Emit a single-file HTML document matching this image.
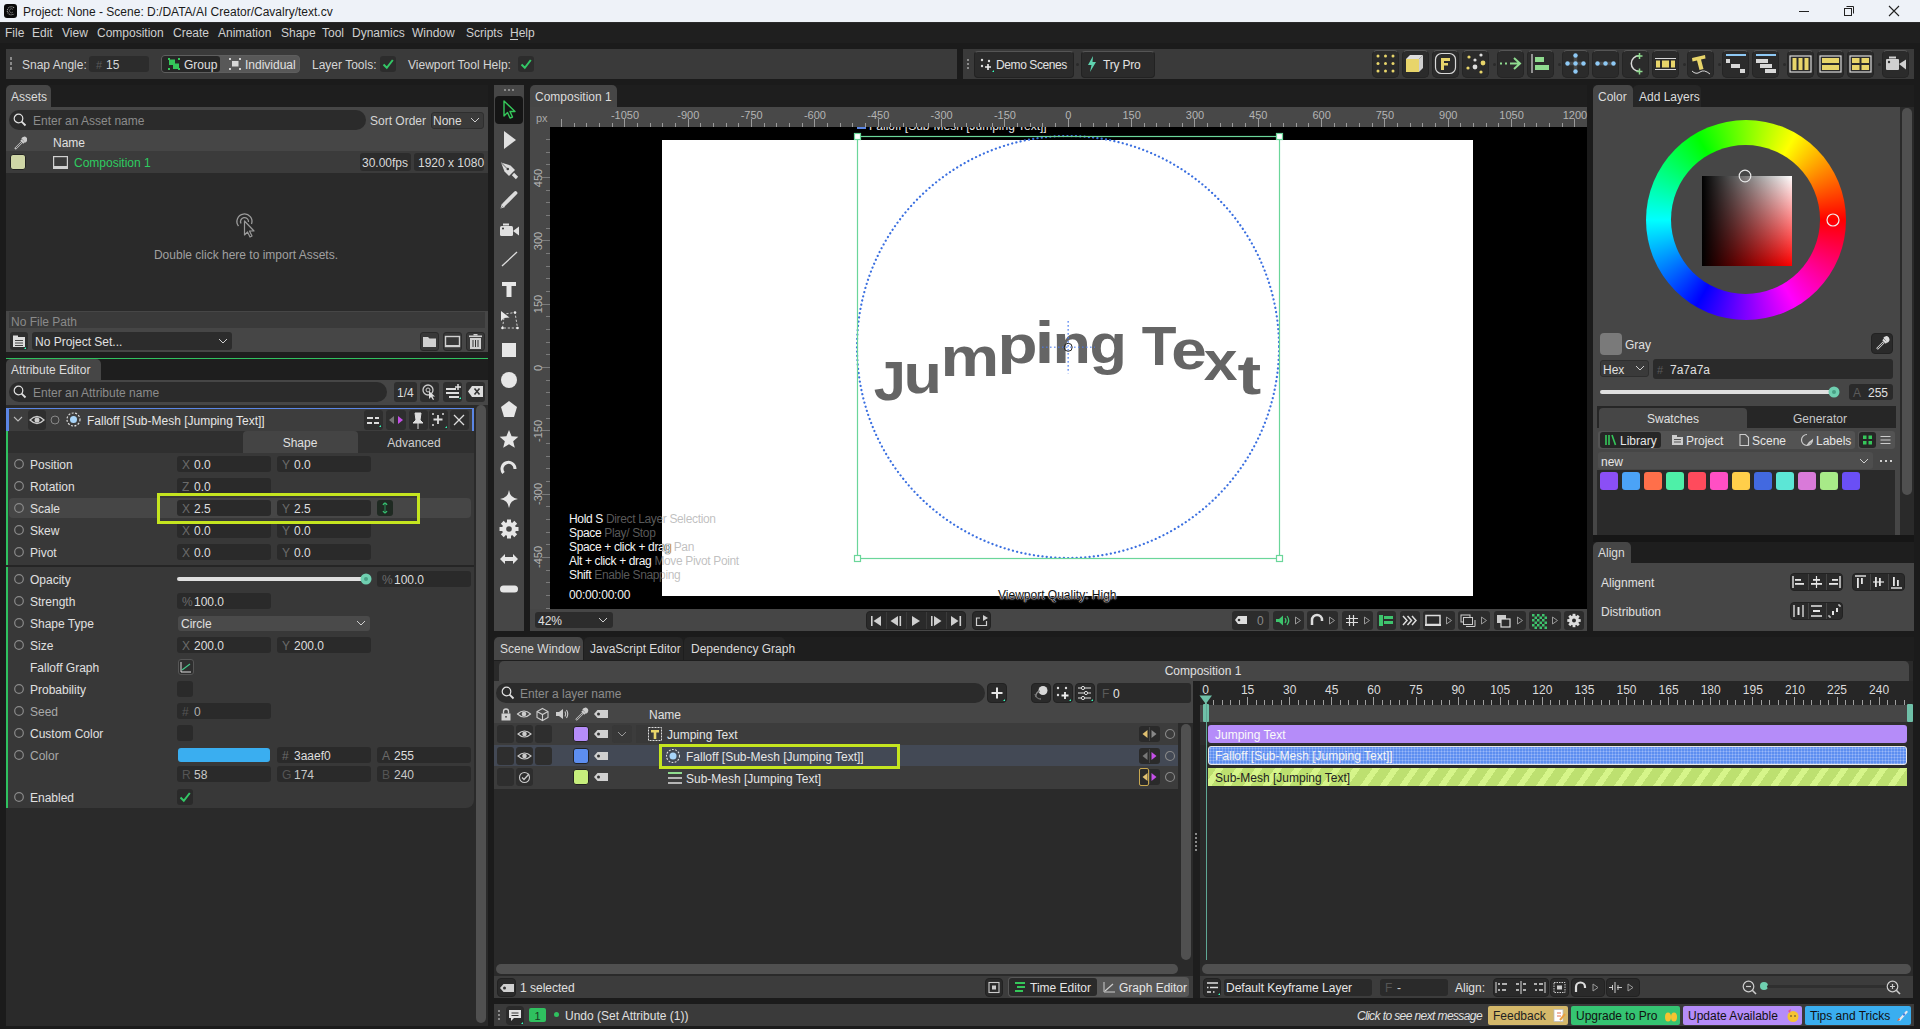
<!DOCTYPE html><html><head><meta charset="utf-8"><style>
html,body{margin:0;padding:0;width:1920px;height:1029px;overflow:hidden;background:#1b1b1b;font-family:"Liberation Sans",sans-serif;}
.a{position:absolute;box-sizing:border-box;}
.t{white-space:pre;}
</style></head><body>
<div class="a" style="left:0px;top:0px;width:1920px;height:23px;background:#eef2f8;"></div>
<div class="a" style="left:0px;top:22px;width:1920px;height:1px;background:#2a2a2a;"></div>
<div class="a" style="left:3.5px;top:4px;width:13px;height:13.5px;background:#0a0a0a;border-radius:3px"></div>
<svg class="a" style="left:3.5px;top:4px;" width="13" height="13.5" viewBox="0 0 13 13.5"><path d="M10 3.8 A4 4 0 1 0 10 9.7" fill="none" stroke="#aaa" stroke-width="1.1" stroke-dasharray="1 0.8"/><path d="M9 5.5 A2 2 0 1 0 9 8" fill="none" stroke="#777" stroke-width="0.8"/></svg>
<div class="a t" style="left:23px;top:5.0px;line-height:14px;font-size:12px;color:#1a1a1a;">Project: None - Scene: D:/DATA/AI Creator/Cavalry/text.cv</div>
<div class="a" style="left:1799px;top:11px;width:10px;height:1px;background:#222;"></div>
<svg class="a" style="left:1843px;top:5px;" width="12" height="12" viewBox="0 0 12 12"><rect x="1.5" y="3.5" width="7" height="7" fill="none" stroke="#222"/><path d="M3.5 1.5 H10.5 V8.5" fill="none" stroke="#222"/></svg>
<svg class="a" style="left:1888px;top:5px;" width="12" height="12" viewBox="0 0 12 12"><path d="M1 1 L11 11 M11 1 L1 11" stroke="#222" stroke-width="1.1"/></svg>
<div class="a" style="left:0px;top:23px;width:1920px;height:20px;background:#1f1f1f;"></div>
<div class="a t" style="left:5px;top:26.0px;line-height:14px;font-size:12px;color:#cfcfcf;">File</div>
<div class="a t" style="left:32px;top:26.0px;line-height:14px;font-size:12px;color:#cfcfcf;">Edit</div>
<div class="a t" style="left:62px;top:26.0px;line-height:14px;font-size:12px;color:#cfcfcf;">View</div>
<div class="a t" style="left:97px;top:26.0px;line-height:14px;font-size:12px;color:#cfcfcf;">Composition</div>
<div class="a t" style="left:173px;top:26.0px;line-height:14px;font-size:12px;color:#cfcfcf;">Create</div>
<div class="a t" style="left:218px;top:26.0px;line-height:14px;font-size:12px;color:#cfcfcf;">Animation</div>
<div class="a t" style="left:281px;top:26.0px;line-height:14px;font-size:12px;color:#cfcfcf;">Shape</div>
<div class="a t" style="left:322px;top:26.0px;line-height:14px;font-size:12px;color:#cfcfcf;">Tool</div>
<div class="a t" style="left:352px;top:26.0px;line-height:14px;font-size:12px;color:#cfcfcf;">Dynamics</div>
<div class="a t" style="left:412px;top:26.0px;line-height:14px;font-size:12px;color:#cfcfcf;">Window</div>
<div class="a t" style="left:466px;top:26.0px;line-height:14px;font-size:12px;color:#cfcfcf;">Scripts</div>
<div class="a t" style="left:510px;top:26.0px;line-height:14px;font-size:12px;color:#cfcfcf;">Help</div>
<div class="a" style="left:510px;top:39px;width:8px;height:1px;background:#cfcfcf;"></div>
<div class="a" style="left:6px;top:49px;width:951px;height:30px;background:#3a3a3a;"></div>
<div class="a" style="left:963px;top:49px;width:951px;height:30px;background:#3a3a3a;"></div>
<div class="a" style="left:10px;top:57px;width:2px;height:3px;background:#8a8a8a;"></div>
<div class="a" style="left:10px;top:62px;width:2px;height:3px;background:#8a8a8a;"></div>
<div class="a" style="left:10px;top:67px;width:2px;height:3px;background:#8a8a8a;"></div>
<div class="a t" style="left:22px;top:57.5px;line-height:14px;font-size:12px;color:#d6d6d6;">Snap Angle:</div>
<div class="a" style="left:89px;top:56px;width:60px;height:16px;background:#2c2c2c;border-radius:3px"></div>
<div class="a t" style="left:96px;top:57.5px;line-height:14px;font-size:11px;color:#5a5a5a;">#</div>
<div class="a t" style="left:106px;top:57.5px;line-height:14px;font-size:12px;color:#d6d6d6;">15</div>
<div class="a" style="left:161px;top:55px;width:139px;height:18px;background:#585858;border-radius:4px;border:1px solid #5e5e5e"></div>
<div class="a" style="left:162px;top:56px;width:58px;height:16px;background:#262626;border-radius:3px"></div>
<svg class="a" style="left:167px;top:57px;" width="14" height="14" viewBox="0 0 14 14"><rect x="1" y="1" width="2" height="2" fill="#35c75a"/><rect x="11" y="1" width="2" height="2" fill="#35c75a"/><rect x="1" y="11" width="2" height="2" fill="#35c75a"/><rect x="11" y="11" width="2" height="2" fill="#35c75a"/><rect x="2" y="2.5" width="6" height="5.5" fill="#35c75a"/><rect x="6" y="6.5" width="6" height="5.5" fill="#35c75a"/></svg>
<div class="a t" style="left:184px;top:57.5px;line-height:14px;font-size:12px;color:#e0e0e0;">Group</div>
<svg class="a" style="left:228px;top:57px;" width="14" height="14" viewBox="0 0 14 14"><rect x="1" y="1" width="2" height="2" fill="#d0d0d0"/><rect x="11" y="1" width="2" height="2" fill="#d0d0d0"/><rect x="1" y="11" width="2" height="2" fill="#d0d0d0"/><rect x="11" y="11" width="2" height="2" fill="#d0d0d0"/><rect x="4" y="4" width="6.5" height="5.5" fill="#d8d8d8"/></svg>
<div class="a t" style="left:245px;top:57.5px;line-height:14px;font-size:12px;color:#e0e0e0;">Individual</div>
<div class="a t" style="left:312px;top:57.5px;line-height:14px;font-size:12px;color:#d6d6d6;">Layer Tools:</div>
<div class="a" style="left:380px;top:56px;width:16px;height:16px;background:#2c2c2c;border-radius:3px"></div>
<svg class="a" style="left:380px;top:56px;" width="16" height="16" viewBox="0 0 16 16"><path d="M3.5 8.5 L6.8 11.8 L12.8 4" fill="none" stroke="#33c766" stroke-width="2"/></svg>
<div class="a t" style="left:408px;top:57.5px;line-height:14px;font-size:12px;color:#d6d6d6;">Viewport Tool Help:</div>
<div class="a" style="left:518px;top:56px;width:16px;height:16px;background:#2c2c2c;border-radius:3px"></div>
<svg class="a" style="left:518px;top:56px;" width="16" height="16" viewBox="0 0 16 16"><path d="M3.5 8.5 L6.8 11.8 L12.8 4" fill="none" stroke="#33c766" stroke-width="2"/></svg>
<div class="a" style="left:967px;top:59px;width:2px;height:2px;background:#8a8a8a;"></div>
<div class="a" style="left:967px;top:63px;width:2px;height:2px;background:#8a8a8a;"></div>
<div class="a" style="left:967px;top:67px;width:2px;height:2px;background:#8a8a8a;"></div>
<div class="a" style="left:974px;top:51px;width:100px;height:27px;background:#2b2b2b;border-radius:4px;border:1px solid #222;border-top:1px solid #555"></div>
<svg class="a" style="left:979px;top:57px;" width="16" height="16" viewBox="0 0 16 16"><circle cx="3" cy="3" r="1.2" fill="#ddd"/><circle cx="10" cy="4" r="1.2" fill="#ddd"/><circle cx="3" cy="9" r="1.2" fill="#ddd"/><path d="M9 7 V13 M6 10 H12" stroke="#eee" stroke-width="1.6"/><path d="M13 15 L15 13 V15Z" fill="#3fb"></svg>
<div class="a t" style="left:996px;top:57.5px;line-height:14px;font-size:12px;color:#e2e2e2;letter-spacing:-0.4px">Demo Scenes</div>
<div class="a" style="left:1081px;top:51px;width:74px;height:27px;background:#2b2b2b;border-radius:4px;border:1px solid #222;border-top:1px solid #555"></div>
<svg class="a" style="left:1087px;top:56px;" width="10" height="16" viewBox="0 0 10 16"><path d="M6 0 L1 9 H4.5 L3 16 L9 6 H5.5 Z" fill="#5fd4b0"/></svg>
<div class="a t" style="left:1103px;top:57.5px;line-height:14px;font-size:12px;color:#e2e2e2;letter-spacing:-0.2px">Try Pro</div>
<div class="a" style="left:1076px;top:63px;width:3px;height:3px;background:#2a2a2a;border-radius:2px"></div>
<div class="a" style="left:1372px;top:50px;width:27px;height:28px;background:#2b2b2b;border-radius:5px;border:1px solid #252525;border-top-color:#555"></div>
<svg class="a" style="left:1372px;top:50px;" width="27" height="28" viewBox="0 0 27 28"><circle cx="6.0" cy="6.0" r="1.5" fill="#e8d56a"/><circle cx="6.0" cy="13.5" r="1.5" fill="#e8d56a"/><circle cx="6.0" cy="21.0" r="1.5" fill="#e8d56a"/><circle cx="13.5" cy="6.0" r="1.5" fill="#e8d56a"/><circle cx="13.5" cy="13.5" r="1.5" fill="#e8d56a"/><circle cx="13.5" cy="21.0" r="1.5" fill="#e8d56a"/><circle cx="21.0" cy="6.0" r="1.5" fill="#e8d56a"/><circle cx="21.0" cy="13.5" r="1.5" fill="#e8d56a"/><circle cx="21.0" cy="21.0" r="1.5" fill="#e8d56a"/></svg>
<div class="a" style="left:1402px;top:50px;width:27px;height:28px;background:#2b2b2b;border-radius:5px;border:1px solid #252525;border-top-color:#555"></div>
<svg class="a" style="left:1402px;top:50px;" width="27" height="28" viewBox="0 0 27 28"><path d="M4 9 L8 5 H21 L17 9Z" fill="#ddd"/><path d="M17 9 L21 5 V18 L17 22Z" fill="#cfcfcf"/><rect x="4" y="9" width="13" height="13" fill="#e8d56a"/></svg>
<div class="a" style="left:1432px;top:50px;width:27px;height:28px;background:#2b2b2b;border-radius:5px;border:1px solid #252525;border-top-color:#555"></div>
<svg class="a" style="left:1432px;top:50px;" width="27" height="28" viewBox="0 0 27 28"><rect x="3.5" y="3.5" width="20" height="20" rx="6" fill="none" stroke="#d9d9d9" stroke-width="1.2"/><rect x="9" y="8" width="3" height="12" fill="#e8d56a"/><rect x="9" y="8" width="9" height="3" fill="#e8d56a"/><rect x="9" y="13" width="7" height="2.5" fill="#e8d56a"/></svg>
<div class="a" style="left:1462px;top:50px;width:27px;height:28px;background:#2b2b2b;border-radius:5px;border:1px solid #252525;border-top-color:#555"></div>
<svg class="a" style="left:1462px;top:50px;" width="27" height="28" viewBox="0 0 27 28"><circle cx="7" cy="7" r="1.6" fill="#e8d56a"/><circle cx="19" cy="5" r="1.6" fill="#ddd"/><circle cx="13" cy="10" r="1.6" fill="#ddd"/><circle cx="21" cy="13" r="2.4" fill="#e8d56a"/><circle cx="13" cy="17" r="2.4" fill="#ddd"/><circle cx="6" cy="18" r="1.6" fill="#e8d56a"/><circle cx="19" cy="22" r="1.6" fill="#e8d56a"/></svg>
<div class="a" style="left:1497px;top:50px;width:27px;height:28px;background:#2b2b2b;border-radius:5px;border:1px solid #252525;border-top-color:#555"></div>
<svg class="a" style="left:1497px;top:50px;" width="27" height="28" viewBox="0 0 27 28"><path d="M3 13.5 H5 M8 13.5 H10 M13 13.5 H22 M17 8 L23 13.5 L17 19" fill="none" stroke="#8fdc8f" stroke-width="2"/></svg>
<div class="a" style="left:1527px;top:50px;width:27px;height:28px;background:#2b2b2b;border-radius:5px;border:1px solid #252525;border-top-color:#555"></div>
<svg class="a" style="left:1527px;top:50px;" width="27" height="28" viewBox="0 0 27 28"><path d="M5 4 V23" stroke="#d9d9d9" stroke-width="1.2"/><rect x="8" y="7" width="9" height="5" fill="#8fdc8f"/><rect x="8" y="15" width="14" height="5" fill="#8fdc8f"/></svg>
<div class="a" style="left:1562px;top:50px;width:27px;height:28px;background:#2b2b2b;border-radius:5px;border:1px solid #252525;border-top-color:#555"></div>
<svg class="a" style="left:1562px;top:50px;" width="27" height="28" viewBox="0 0 27 28"><path d="M13.5 5V22M5.5 13.5H21.5" stroke="#484848" stroke-width="3.5"/><circle cx="13.5" cy="5.5" r="2.2" fill="#8ec9f5"/><circle cx="13.5" cy="13.5" r="2.2" fill="#8ec9f5"/><circle cx="13.5" cy="21.5" r="2.2" fill="#8ec9f5"/><circle cx="5.5" cy="13.5" r="2.2" fill="#8ec9f5"/><circle cx="21.5" cy="13.5" r="2.2" fill="#8ec9f5"/></svg>
<div class="a" style="left:1592px;top:50px;width:27px;height:28px;background:#2b2b2b;border-radius:5px;border:1px solid #252525;border-top-color:#555"></div>
<svg class="a" style="left:1592px;top:50px;" width="27" height="28" viewBox="0 0 27 28"><path d="M5.5 13.5H21.5" stroke="#484848" stroke-width="3.5"/><circle cx="5.5" cy="13.5" r="2.2" fill="#8ec9f5"/><circle cx="13.5" cy="13.5" r="2.2" fill="#8ec9f5"/><circle cx="21.5" cy="13.5" r="2.2" fill="#8ec9f5"/></svg>
<div class="a" style="left:1622px;top:50px;width:27px;height:28px;background:#2b2b2b;border-radius:5px;border:1px solid #252525;border-top-color:#555"></div>
<svg class="a" style="left:1622px;top:50px;" width="27" height="28" viewBox="0 0 27 28"><path d="M17 5.8 A7.7 7.7 0 0 0 17 21.2" fill="none" stroke="#d9d9d9" stroke-width="1.5"/><path d="M17.5 3V9M14.5 6H20.5M17.5 18.5V24.5M14.5 21.5H20.5" stroke="#8fdc8f" stroke-width="1.5"/></svg>
<div class="a" style="left:1652px;top:50px;width:27px;height:28px;background:#2b2b2b;border-radius:5px;border:1px solid #252525;border-top-color:#555"></div>
<svg class="a" style="left:1652px;top:50px;" width="27" height="28" viewBox="0 0 27 28"><path d="M3 8.5H24M3 19.5H24" stroke="#d9d9d9" stroke-width="1.2"/><rect x="4" y="10.5" width="4" height="7" fill="#e8d56a"/><rect x="10" y="10.5" width="7" height="7" fill="#e8d56a"/><rect x="19" y="10.5" width="4" height="7" fill="#e8d56a"/></svg>
<div class="a" style="left:1687px;top:50px;width:27px;height:28px;background:#2b2b2b;border-radius:5px;border:1px solid #252525;border-top-color:#555"></div>
<svg class="a" style="left:1687px;top:50px;" width="27" height="28" viewBox="0 0 27 28"><path d="M5 8 L18 5 L18.5 8.5 L14 9.5 L16.5 19 L12.5 20 L10 10.5 L5.5 11.5Z" fill="#e8d56a"/><path d="M5 21 Q9 25 13 22 T23 24" fill="none" stroke="#d9d9d9" stroke-width="1"/></svg>
<div class="a" style="left:1722px;top:50px;width:27px;height:28px;background:#2b2b2b;border-radius:5px;border:1px solid #252525;border-top-color:#555"></div>
<svg class="a" style="left:1722px;top:50px;" width="27" height="28" viewBox="0 0 27 28"><rect x="4" y="4" width="20" height="2" fill="#8ec9f5"/><rect x="4" y="9" width="4" height="4" fill="#d8d8d8"/><rect x="9" y="14" width="9" height="4" fill="#d8d8d8"/><rect x="18" y="19" width="5" height="4" fill="#d8d8d8"/></svg>
<div class="a" style="left:1752px;top:50px;width:27px;height:28px;background:#2b2b2b;border-radius:5px;border:1px solid #252525;border-top-color:#555"></div>
<svg class="a" style="left:1752px;top:50px;" width="27" height="28" viewBox="0 0 27 28"><rect x="4" y="4" width="20" height="2" fill="#8ec9f5"/><rect x="4" y="9" width="12" height="4" fill="#d8d8d8"/><rect x="8" y="14" width="12" height="4" fill="#d8d8d8"/><rect x="13" y="19" width="11" height="4" fill="#d8d8d8"/></svg>
<div class="a" style="left:1787px;top:50px;width:27px;height:28px;background:#2b2b2b;border-radius:5px;border:1px solid #252525;border-top-color:#555"></div>
<svg class="a" style="left:1787px;top:50px;" width="27" height="28" viewBox="0 0 27 28"><rect x="3" y="6" width="21" height="16" fill="none" stroke="#d9d9d9" stroke-width="1.2"/><rect x="5.5" y="8" width="4" height="12" fill="#e8d56a"/><rect x="11.5" y="8" width="4" height="12" fill="#e8d56a"/><rect x="17.5" y="8" width="4" height="12" fill="#e8d56a"/></svg>
<div class="a" style="left:1817px;top:50px;width:27px;height:28px;background:#2b2b2b;border-radius:5px;border:1px solid #252525;border-top-color:#555"></div>
<svg class="a" style="left:1817px;top:50px;" width="27" height="28" viewBox="0 0 27 28"><rect x="3" y="6" width="21" height="16" fill="none" stroke="#d9d9d9" stroke-width="1.2"/><rect x="5" y="8" width="17" height="5" fill="#e8d56a"/><rect x="5" y="15" width="17" height="5" fill="#e8d56a"/></svg>
<div class="a" style="left:1847px;top:50px;width:27px;height:28px;background:#2b2b2b;border-radius:5px;border:1px solid #252525;border-top-color:#555"></div>
<svg class="a" style="left:1847px;top:50px;" width="27" height="28" viewBox="0 0 27 28"><rect x="3" y="6" width="21" height="16" fill="none" stroke="#d9d9d9" stroke-width="1.2"/><rect x="5" y="8" width="7.5" height="5" fill="#e8d56a"/><rect x="14.5" y="8" width="7.5" height="5" fill="#e8d56a"/><rect x="5" y="15" width="7.5" height="5" fill="#e8d56a"/><rect x="14.5" y="15" width="7.5" height="5" fill="#e8d56a"/></svg>
<div class="a" style="left:1882px;top:50px;width:27px;height:28px;background:#2b2b2b;border-radius:5px;border:1px solid #252525;border-top-color:#555"></div>
<svg class="a" style="left:1882px;top:50px;" width="27" height="28" viewBox="0 0 27 28"><rect x="4" y="9" width="13" height="11" rx="1" fill="#d0d0d0"/><rect x="7" y="6.5" width="7" height="2" fill="#d0d0d0"/><path d="M17 14 L24 9.5 V19.5Z" fill="#d0d0d0"/><circle cx="7" cy="12" r="1.2" fill="#333"/></svg>
<div class="a" style="left:1493px;top:63px;width:3px;height:3px;background:#2a2a2a;border-radius:2px"></div>
<div class="a" style="left:1558px;top:63px;width:3px;height:3px;background:#2a2a2a;border-radius:2px"></div>
<div class="a" style="left:1683px;top:63px;width:3px;height:3px;background:#2a2a2a;border-radius:2px"></div>
<div class="a" style="left:1718px;top:63px;width:3px;height:3px;background:#2a2a2a;border-radius:2px"></div>
<div class="a" style="left:1783px;top:63px;width:3px;height:3px;background:#2a2a2a;border-radius:2px"></div>
<div class="a" style="left:1878px;top:63px;width:3px;height:3px;background:#2a2a2a;border-radius:2px"></div>
<div class="a" style="left:6px;top:85px;width:482px;height:22px;background:#1e1e1e;"></div>
<div class="a" style="left:6px;top:85px;width:45px;height:22px;background:#464646;border-radius:5px 5px 0 0"></div>
<div class="a t" style="left:11px;top:90.0px;line-height:14px;font-size:12px;color:#dcdcdc;">Assets</div>
<div class="a" style="left:6px;top:107px;width:482px;height:44px;background:#464646;"></div>
<div class="a" style="left:9px;top:110px;width:357px;height:20px;background:#2b2b2b;border-radius:10px"></div>
<svg class="a" style="left:13px;top:113px;" width="14" height="14" viewBox="0 0 14 14"><circle cx="5.5" cy="5.5" r="4.3" fill="none" stroke="#e0e0e0" stroke-width="1.2"/><path d="M8.6 8.6 L12.5 12.5" stroke="#e0e0e0" stroke-width="1.8"/></svg>
<div class="a t" style="left:33px;top:113.5px;line-height:14px;font-size:12px;color:#8c8c8c;">Enter an Asset name</div>
<div class="a t" style="left:370px;top:113.5px;line-height:14px;font-size:12px;color:#d6d6d6;">Sort Order</div>
<div class="a" style="left:431px;top:112px;width:53px;height:17px;background:#3a3a3a;border-radius:3px;border:1px solid #2e2e2e"></div>
<div class="a t" style="left:433px;top:114.0px;line-height:14px;font-size:12px;color:#dcdcdc;">None</div>
<svg class="a" style="left:469px;top:115px;" width="12" height="10" viewBox="0 0 12 10"><path d="M2 3 L6 7 L10 3" fill="none" stroke="#cfcfcf" stroke-width="1"/></svg>
<svg class="a" style="left:13px;top:136px;" width="14" height="14" viewBox="0 0 14 14"><path d="M2 13 L9 6" stroke="#bbb" stroke-width="2.2"/><path d="M3 12 L9.5 5.5" stroke="#3a3a3a" stroke-width="0.8"/><path d="M8 4 L11 7 M9 3 Q11 0.5 13 2.5 Q14 4.5 11.5 6" fill="#ccc" stroke="#ccc" stroke-width="2"/></svg>
<div class="a t" style="left:53px;top:135.5px;line-height:14px;font-size:12px;color:#e0e0e0;">Name</div>
<div class="a" style="left:6px;top:151px;width:482px;height:22px;background:#3b3b3b;"></div>
<div class="a" style="left:10px;top:154px;width:16px;height:16px;background:#cfd6a6;border-radius:3px;border:1px solid #222"></div>
<svg class="a" style="left:53px;top:156px;" width="15" height="13" viewBox="0 0 15 13"><rect x="0.6" y="0.6" width="13.8" height="10" fill="none" stroke="#d0d0d0" stroke-width="1.2"/><rect x="0" y="10" width="15" height="3" fill="#d0d0d0"/></svg>
<div class="a t" style="left:74px;top:155.5px;line-height:14px;font-size:12px;color:#2ecc60;">Composition 1</div>
<div class="a" style="left:360px;top:153px;width:51px;height:18px;background:#2c2c2c;border-radius:3px"></div>
<div class="a t" style="left:362px;top:155.5px;line-height:14px;font-size:12px;color:#dadada;">30.00fps</div>
<div class="a" style="left:414px;top:153px;width:70px;height:18px;background:#2c2c2c;border-radius:3px"></div>
<div class="a t" style="left:418px;top:155.5px;line-height:14px;font-size:12px;color:#dadada;">1920 x 1080</div>
<div class="a" style="left:6px;top:173px;width:482px;height:138px;background:#2a2a2a;"></div>
<svg class="a" style="left:232px;top:210px;" width="26" height="28" viewBox="0 0 26 28"><path d="M6.5 16 A7.5 7.5 0 1 1 19.5 14" fill="none" stroke="#9a9a9a" stroke-width="1.3"/><path d="M9 13.5 A4 4 0 1 1 16.5 12" fill="none" stroke="#9a9a9a" stroke-width="1.3"/><path d="M12.5 11 V25 L15.5 22 L18 27 L20 26 L17.5 21 H22 Z" fill="#2a2a2a" stroke="#9a9a9a" stroke-width="1.2" stroke-linejoin="round"/></svg>
<div class="a t" style="left:46.0px;top:248.0px;width:400px;text-align:center;line-height:14px;font-size:12px;color:#a0a0a0;">Double click here to import Assets.</div>
<div class="a" style="left:6px;top:311px;width:482px;height:41px;background:#464646;"></div>
<div class="a" style="left:9px;top:312px;width:476px;height:16px;background:#3a3a3a;"></div>
<div class="a t" style="left:11px;top:314.5px;line-height:14px;font-size:12px;color:#8a8a8a;">No File Path</div>
<div class="a" style="left:10px;top:332px;width:18px;height:18px;background:#2e2e2e;border-radius:3px"></div>
<svg class="a" style="left:11px;top:334px;" width="16" height="15" viewBox="0 0 16 15"><rect x="2" y="3" width="12" height="10" fill="#ddd"/><rect x="2" y="1.5" width="5" height="2" fill="#ddd"/><path d="M4 6.5H12M4 9H12M4 11.5H12" stroke="#444" stroke-width="1"/><path d="M13 15 L15 13 V15Z" fill="#3fb"/></svg>
<div class="a" style="left:32px;top:332px;width:200px;height:18px;background:#2c2c2c;border-radius:3px"></div>
<div class="a t" style="left:35px;top:334.5px;line-height:14px;font-size:12px;color:#e0e0e0;">No Project Set...</div>
<svg class="a" style="left:217px;top:336px;" width="12" height="10" viewBox="0 0 12 10"><path d="M2 3 L6 7 L10 3" fill="none" stroke="#cfcfcf" stroke-width="1"/></svg>
<div class="a" style="left:420px;top:332px;width:19px;height:19px;background:#383838;border-radius:3px;border:1px solid #2a2a2a"></div>
<svg class="a" style="left:420px;top:332px;" width="19" height="19" viewBox="0 0 19 19"><path d="M3 5 H8 L9.5 6.5 H16 V15 H3Z" fill="#d0d0d0"/></svg>
<div class="a" style="left:443px;top:332px;width:19px;height:19px;background:#383838;border-radius:3px;border:1px solid #2a2a2a"></div>
<svg class="a" style="left:443px;top:332px;" width="19" height="19" viewBox="0 0 19 19"><rect x="2.5" y="4.5" width="14" height="10" fill="none" stroke="#d0d0d0" stroke-width="1.4"/><rect x="2" y="13" width="15" height="2" fill="#d0d0d0"/></svg>
<div class="a" style="left:466px;top:332px;width:19px;height:19px;background:#383838;border-radius:3px;border:1px solid #2a2a2a"></div>
<svg class="a" style="left:466px;top:332px;" width="19" height="19" viewBox="0 0 19 19"><rect x="4" y="6" width="11" height="11" fill="#d0d0d0"/><rect x="3" y="3.5" width="13" height="1.6" fill="#d0d0d0"/><rect x="7.5" y="2" width="4" height="1.5" fill="#d0d0d0"/><path d="M7 8V15M9.5 8V15M12 8V15" stroke="#333" stroke-width="1"/></svg>
<div class="a" style="left:6px;top:352px;width:482px;height:6px;background:#1e1e1e;"></div>
<div class="a" style="left:6px;top:357.5px;width:482px;height:1.3px;background:#2fc15f;"></div>
<div class="a" style="left:6px;top:359px;width:482px;height:21px;background:#1e1e1e;"></div>
<div class="a" style="left:6px;top:359px;width:95px;height:21px;background:#464646;border-radius:5px 5px 0 0"></div>
<div class="a t" style="left:11px;top:363.0px;line-height:14px;font-size:12px;color:#dcdcdc;">Attribute Editor</div>
<div class="a" style="left:6px;top:380px;width:482px;height:25px;background:#464646;"></div>
<div class="a" style="left:9px;top:382px;width:378px;height:20px;background:#2b2b2b;border-radius:10px"></div>
<svg class="a" style="left:13px;top:385px;" width="14" height="14" viewBox="0 0 14 14"><circle cx="5.5" cy="5.5" r="4.3" fill="none" stroke="#e0e0e0" stroke-width="1.2"/><path d="M8.6 8.6 L12.5 12.5" stroke="#e0e0e0" stroke-width="1.8"/></svg>
<div class="a t" style="left:33px;top:385.5px;line-height:14px;font-size:12px;color:#8c8c8c;">Enter an Attribute name</div>
<div class="a" style="left:394px;top:382px;width:23px;height:20px;background:#2e2e2e;border-radius:3px"></div>
<div class="a t" style="left:397px;top:385.5px;line-height:14px;font-size:12px;color:#dcdcdc;">1/4</div>
<div class="a" style="left:420px;top:382px;width:19px;height:20px;background:#2e2e2e;border-radius:3px"></div>
<svg class="a" style="left:420px;top:382px;" width="19" height="20" viewBox="0 0 19 20"><circle cx="8" cy="8" r="5" fill="none" stroke="#ccc" stroke-width="1.3"/><circle cx="8" cy="8" r="2" fill="none" stroke="#ccc" stroke-width="1"/><path d="M9 9 L9 17 L11 15 L13 18 L14 17.5 L12.5 14.5 L15 14.5Z" fill="#ddd"/></svg>
<div class="a" style="left:443px;top:382px;width:19px;height:20px;background:#2e2e2e;border-radius:3px"></div>
<svg class="a" style="left:443px;top:382px;" width="19" height="20" viewBox="0 0 19 20"><path d="M3 7H13M3 11H16M6 15H16" stroke="#ddd" stroke-width="1.8"/><path d="M15 2V8M12 5H18" stroke="#ddd" stroke-width="1.5"/><path d="M16 17 L18 15 V17Z" fill="#3fb"/></svg>
<div class="a" style="left:466px;top:382px;width:19px;height:20px;background:#2e2e2e;border-radius:3px"></div>
<svg class="a" style="left:466px;top:382px;" width="19" height="20" viewBox="0 0 19 20"><path d="M2 9.5 L6 4 H17 V15 H6Z" fill="#ddd"/><path d="M8.5 6.5 L13.5 12.5 M13.5 6.5 L8.5 12.5" stroke="#333" stroke-width="1.6"/></svg>
<div class="a" style="left:6px;top:405px;width:482px;height:621px;background:#2a2a2a;"></div>
<div class="a" style="left:476px;top:405px;width:10px;height:618px;background:#505050;border-radius:5px"></div>
<div class="a" style="left:6px;top:408px;width:468px;height:23px;background:#3d3d3d;border-top:1.5px solid #5b86e5;border-right:2px solid #5b86e5"></div>
<div class="a" style="left:6px;top:408px;width:3px;height:23px;background:#5b86e5;"></div>
<svg class="a" style="left:12px;top:414px;" width="12" height="10" viewBox="0 0 12 10"><path d="M2 3 L6 7 L10 3" fill="none" stroke="#bbb" stroke-width="1.1"/></svg>
<div class="a" style="left:28px;top:410px;width:18px;height:20px;background:#2e2e2e;border-radius:3px"></div>
<svg class="a" style="left:28px;top:413px;" width="18" height="14" viewBox="0 0 18 14"><path d="M2 7 Q9 0 16 7 Q9 14 2 7Z" fill="none" stroke="#ccc" stroke-width="1.3"/><circle cx="9" cy="7" r="2.5" fill="#ccc"/></svg>
<svg class="a" style="left:49px;top:413px;" width="14" height="14" viewBox="0 0 14 14"><circle cx="6" cy="7" r="4" fill="none" stroke="#888" stroke-width="1"/></svg>
<svg class="a" style="left:65px;top:411px;" width="17" height="17" viewBox="0 0 17 17"><circle cx="8.5" cy="8.5" r="6.5" fill="none" stroke="#ddd" stroke-width="1.2" stroke-dasharray="2 1.5"/><circle cx="8.5" cy="8.5" r="3.5" fill="#a8d4f8"/></svg>
<div class="a t" style="left:87px;top:413.5px;line-height:14px;font-size:12px;color:#e6e6e6;">Falloff [Sub-Mesh [Jumping Text]]</div>
<div class="a" style="left:364px;top:410px;width:19px;height:20px;background:#2e2e2e;border-radius:3px"></div>
<svg class="a" style="left:364px;top:411px;" width="19" height="19" viewBox="0 0 19 19"><path d="M3 7H9M11 7H15M3 12H8M10 12H15" stroke="#ddd" stroke-width="1.8"/><path d="M15 16 L17 14 V16Z" fill="#3fb"/></svg>
<div class="a" style="left:409px;top:410px;width:19px;height:20px;background:#2e2e2e;border-radius:3px"></div>
<svg class="a" style="left:409px;top:411px;" width="19" height="19" viewBox="0 0 19 19"><path d="M6 2 H12 L11 9 L14 12 H4 L7 9Z M9 12 V18" fill="#ddd" stroke="#ddd" stroke-width="1"/></svg>
<div class="a" style="left:429px;top:410px;width:19px;height:20px;background:#2e2e2e;border-radius:3px"></div>
<svg class="a" style="left:429px;top:411px;" width="19" height="19" viewBox="0 0 19 19"><path d="M9 4V13M4.5 8.5H13.5" stroke="#ddd" stroke-width="1.8"/><circle cx="4" cy="3" r="1" fill="#ddd"/><circle cx="14" cy="3" r="1" fill="#ddd"/><circle cx="4" cy="14" r="1" fill="#ddd"/><path d="M16 17 L18 15 V17Z" fill="#3fb"/></svg>
<div class="a" style="left:450px;top:410px;width:19px;height:20px;background:#2e2e2e;border-radius:3px"></div>
<svg class="a" style="left:450px;top:411px;" width="19" height="19" viewBox="0 0 19 19"><path d="M4 4 L14 14 M14 4 L4 14" stroke="#ddd" stroke-width="1.3"/></svg>
<div class="a" style="left:386px;top:410px;width:20px;height:20px;background:#2e2e2e;border-radius:3px"></div>
<svg class="a" style="left:386px;top:410px;" width="20" height="20" viewBox="0 0 20 20"><path d="M8 6 L3 10 L8 14Z" fill="#777"/><path d="M12 6 L17 10 L12 14Z" fill="#c44fe6"/></svg>
<div class="a" style="left:6px;top:431px;width:468px;height:22px;background:#2f2f2f;"></div>
<div class="a" style="left:243px;top:431px;width:115px;height:22px;background:#444444;border-radius:4px 4px 0 0"></div>
<div class="a t" style="left:242.5px;top:435.5px;width:115px;text-align:center;line-height:14px;font-size:12px;color:#e0e0e0;">Shape</div>
<div class="a t" style="left:356.5px;top:435.5px;width:115px;text-align:center;line-height:14px;font-size:12px;color:#cfcfcf;">Advanced</div>
<div class="a" style="left:6px;top:453px;width:468px;height:355px;background:#383838;border-radius:0 0 8px 0"></div>
<div class="a" style="left:6px;top:431px;width:1.5px;height:377px;background:#2fc15f;"></div>
<div class="a" style="left:9px;top:498px;width:462px;height:20px;background:#464646;border-radius:4px"></div>
<svg class="a" style="left:13px;top:458px;" width="12" height="12" viewBox="0 0 12 12"><circle cx="6" cy="6" r="4.3" fill="none" stroke="#8a8a8a" stroke-width="1.2"/></svg>
<div class="a t" style="left:30px;top:457.5px;line-height:14px;font-size:12px;color:#e0e0e0;">Position</div>
<div class="a" style="left:177px;top:456px;width:94px;height:16px;background:#2a2a2a;border-radius:3px"></div>
<div class="a t" style="left:182px;top:457.5px;line-height:14px;font-size:12px;color:#6a6a6a;">X</div>
<div class="a t" style="left:194px;top:457.5px;line-height:14px;font-size:12px;color:#dedede;">0.0</div>
<div class="a" style="left:277px;top:456px;width:94px;height:16px;background:#2a2a2a;border-radius:3px"></div>
<div class="a t" style="left:282px;top:457.5px;line-height:14px;font-size:12px;color:#6a6a6a;">Y</div>
<div class="a t" style="left:294px;top:457.5px;line-height:14px;font-size:12px;color:#dedede;">0.0</div>
<svg class="a" style="left:13px;top:480px;" width="12" height="12" viewBox="0 0 12 12"><circle cx="6" cy="6" r="4.3" fill="none" stroke="#8a8a8a" stroke-width="1.2"/></svg>
<div class="a t" style="left:30px;top:479.5px;line-height:14px;font-size:12px;color:#e0e0e0;">Rotation</div>
<div class="a" style="left:177px;top:478px;width:94px;height:16px;background:#2a2a2a;border-radius:3px"></div>
<div class="a t" style="left:182px;top:479.5px;line-height:14px;font-size:12px;color:#6a6a6a;">Z</div>
<div class="a t" style="left:194px;top:479.5px;line-height:14px;font-size:12px;color:#dedede;">0.0</div>
<svg class="a" style="left:13px;top:502px;" width="12" height="12" viewBox="0 0 12 12"><circle cx="6" cy="6" r="4.3" fill="none" stroke="#8a8a8a" stroke-width="1.2"/></svg>
<div class="a t" style="left:30px;top:501.5px;line-height:14px;font-size:12px;color:#e0e0e0;">Scale</div>
<div class="a" style="left:177px;top:500px;width:94px;height:16px;background:#2a2a2a;border-radius:3px"></div>
<div class="a t" style="left:182px;top:501.5px;line-height:14px;font-size:12px;color:#6a6a6a;">X</div>
<div class="a t" style="left:194px;top:501.5px;line-height:14px;font-size:12px;color:#dedede;">2.5</div>
<div class="a" style="left:277px;top:500px;width:94px;height:16px;background:#2a2a2a;border-radius:3px"></div>
<div class="a t" style="left:282px;top:501.5px;line-height:14px;font-size:12px;color:#6a6a6a;">Y</div>
<div class="a t" style="left:294px;top:501.5px;line-height:14px;font-size:12px;color:#dedede;">2.5</div>
<svg class="a" style="left:13px;top:524px;" width="12" height="12" viewBox="0 0 12 12"><circle cx="6" cy="6" r="4.3" fill="none" stroke="#8a8a8a" stroke-width="1.2"/></svg>
<div class="a t" style="left:30px;top:523.5px;line-height:14px;font-size:12px;color:#e0e0e0;">Skew</div>
<div class="a" style="left:177px;top:522px;width:94px;height:16px;background:#2a2a2a;border-radius:3px"></div>
<div class="a t" style="left:182px;top:523.5px;line-height:14px;font-size:12px;color:#6a6a6a;">X</div>
<div class="a t" style="left:194px;top:523.5px;line-height:14px;font-size:12px;color:#dedede;">0.0</div>
<div class="a" style="left:277px;top:522px;width:94px;height:16px;background:#2a2a2a;border-radius:3px"></div>
<div class="a t" style="left:282px;top:523.5px;line-height:14px;font-size:12px;color:#6a6a6a;">Y</div>
<div class="a t" style="left:294px;top:523.5px;line-height:14px;font-size:12px;color:#dedede;">0.0</div>
<svg class="a" style="left:13px;top:546px;" width="12" height="12" viewBox="0 0 12 12"><circle cx="6" cy="6" r="4.3" fill="none" stroke="#8a8a8a" stroke-width="1.2"/></svg>
<div class="a t" style="left:30px;top:545.5px;line-height:14px;font-size:12px;color:#e0e0e0;">Pivot</div>
<div class="a" style="left:177px;top:544px;width:94px;height:16px;background:#2a2a2a;border-radius:3px"></div>
<div class="a t" style="left:182px;top:545.5px;line-height:14px;font-size:12px;color:#6a6a6a;">X</div>
<div class="a t" style="left:194px;top:545.5px;line-height:14px;font-size:12px;color:#dedede;">0.0</div>
<div class="a" style="left:277px;top:544px;width:94px;height:16px;background:#2a2a2a;border-radius:3px"></div>
<div class="a t" style="left:282px;top:545.5px;line-height:14px;font-size:12px;color:#6a6a6a;">Y</div>
<div class="a t" style="left:294px;top:545.5px;line-height:14px;font-size:12px;color:#dedede;">0.0</div>
<div class="a" style="left:6px;top:565px;width:468px;height:2px;background:#252525;"></div>
<div class="a" style="left:157px;top:493px;width:263px;height:31px;background:transparent;border:3px solid #c5e51f"></div>
<div class="a" style="left:377px;top:500px;width:16px;height:16px;background:#1f2a22;border-radius:3px"></div>
<svg class="a" style="left:377px;top:500px;" width="16" height="16" viewBox="0 0 16 16"><path d="M8 2.5V13.5" stroke="#2a8a55" stroke-width="1"/><path d="M6 5 Q8 1.5 10 5 M6 11 Q8 14.5 10 11" fill="none" stroke="#35c070" stroke-width="1.3"/></svg>
<svg class="a" style="left:13px;top:573px;" width="12" height="12" viewBox="0 0 12 12"><circle cx="6" cy="6" r="4.3" fill="none" stroke="#8a8a8a" stroke-width="1.2"/></svg>
<div class="a t" style="left:30px;top:572.5px;line-height:14px;font-size:12px;color:#e0e0e0;">Opacity</div>
<div class="a" style="left:177px;top:577px;width:190px;height:4px;background:#e0e0e0;border-radius:2px"></div>
<svg class="a" style="left:359px;top:572px;" width="14" height="14" viewBox="0 0 14 14"><circle cx="7" cy="7" r="5.5" fill="#6fcfb0"/><circle cx="7" cy="7" r="2" fill="#4a9f85"/></svg>
<div class="a" style="left:377px;top:571px;width:94px;height:16px;background:#2a2a2a;border-radius:3px"></div>
<div class="a t" style="left:382px;top:572.5px;line-height:14px;font-size:12px;color:#6a6a6a;">%</div>
<div class="a t" style="left:394px;top:572.5px;line-height:14px;font-size:12px;color:#dedede;">100.0</div>
<svg class="a" style="left:13px;top:595px;" width="12" height="12" viewBox="0 0 12 12"><circle cx="6" cy="6" r="4.3" fill="none" stroke="#8a8a8a" stroke-width="1.2"/></svg>
<div class="a t" style="left:30px;top:594.5px;line-height:14px;font-size:12px;color:#e0e0e0;">Strength</div>
<div class="a" style="left:177px;top:593px;width:94px;height:16px;background:#2a2a2a;border-radius:3px"></div>
<div class="a t" style="left:182px;top:594.5px;line-height:14px;font-size:12px;color:#6a6a6a;">%</div>
<div class="a t" style="left:194px;top:594.5px;line-height:14px;font-size:12px;color:#dedede;">100.0</div>
<svg class="a" style="left:13px;top:617px;" width="12" height="12" viewBox="0 0 12 12"><circle cx="6" cy="6" r="4.3" fill="none" stroke="#8a8a8a" stroke-width="1.2"/></svg>
<div class="a t" style="left:30px;top:616.5px;line-height:14px;font-size:12px;color:#e0e0e0;">Shape Type</div>
<div class="a" style="left:178px;top:616px;width:192px;height:15px;background:#4a4a4a;border-radius:3px"></div>
<div class="a t" style="left:181px;top:617.0px;line-height:14px;font-size:12px;color:#e0e0e0;">Circle</div>
<svg class="a" style="left:355px;top:618px;" width="12" height="10" viewBox="0 0 12 10"><path d="M2 3 L6 7 L10 3" fill="none" stroke="#cfcfcf" stroke-width="1"/></svg>
<svg class="a" style="left:13px;top:639px;" width="12" height="12" viewBox="0 0 12 12"><circle cx="6" cy="6" r="4.3" fill="none" stroke="#8a8a8a" stroke-width="1.2"/></svg>
<div class="a t" style="left:30px;top:638.5px;line-height:14px;font-size:12px;color:#e0e0e0;">Size</div>
<div class="a" style="left:177px;top:637px;width:94px;height:16px;background:#2a2a2a;border-radius:3px"></div>
<div class="a t" style="left:182px;top:638.5px;line-height:14px;font-size:12px;color:#6a6a6a;">X</div>
<div class="a t" style="left:194px;top:638.5px;line-height:14px;font-size:12px;color:#dedede;">200.0</div>
<div class="a" style="left:277px;top:637px;width:94px;height:16px;background:#2a2a2a;border-radius:3px"></div>
<div class="a t" style="left:282px;top:638.5px;line-height:14px;font-size:12px;color:#6a6a6a;">Y</div>
<div class="a t" style="left:294px;top:638.5px;line-height:14px;font-size:12px;color:#dedede;">200.0</div>
<div class="a t" style="left:30px;top:660.5px;line-height:14px;font-size:12px;color:#e0e0e0;">Falloff Graph</div>
<div class="a" style="left:178px;top:659px;width:16px;height:16px;background:#2e2e2e;border-radius:3px;border:1px solid #555"></div>
<svg class="a" style="left:178px;top:659px;" width="16" height="16" viewBox="0 0 16 16"><path d="M3 3V13H13" fill="none" stroke="#ddd" stroke-width="1"/><path d="M4 11 L12 5" stroke="#46c88a" stroke-width="1.2"/></svg>
<svg class="a" style="left:13px;top:683px;" width="12" height="12" viewBox="0 0 12 12"><circle cx="6" cy="6" r="4.3" fill="none" stroke="#8a8a8a" stroke-width="1.2"/></svg>
<div class="a t" style="left:30px;top:682.5px;line-height:14px;font-size:12px;color:#e0e0e0;">Probability</div>
<div class="a" style="left:177px;top:681px;width:16px;height:16px;background:#2a2a2a;border-radius:3px"></div>
<svg class="a" style="left:13px;top:705px;" width="12" height="12" viewBox="0 0 12 12"><circle cx="6" cy="6" r="4.3" fill="none" stroke="#8a8a8a" stroke-width="1.2"/></svg>
<div class="a t" style="left:30px;top:704.5px;line-height:14px;font-size:12px;color:#a9a9a9;">Seed</div>
<div class="a" style="left:177px;top:703px;width:94px;height:16px;background:#2a2a2a;border-radius:3px"></div>
<div class="a t" style="left:182px;top:704.5px;line-height:14px;font-size:12px;color:#555;">#</div>
<div class="a t" style="left:194px;top:704.5px;line-height:14px;font-size:12px;color:#b0b0b0;">0</div>
<svg class="a" style="left:13px;top:727px;" width="12" height="12" viewBox="0 0 12 12"><circle cx="6" cy="6" r="4.3" fill="none" stroke="#8a8a8a" stroke-width="1.2"/></svg>
<div class="a t" style="left:30px;top:726.5px;line-height:14px;font-size:12px;color:#e0e0e0;">Custom Color</div>
<div class="a" style="left:177px;top:725px;width:16px;height:16px;background:#2a2a2a;border-radius:3px"></div>
<svg class="a" style="left:13px;top:749px;" width="12" height="12" viewBox="0 0 12 12"><circle cx="6" cy="6" r="4.3" fill="none" stroke="#8a8a8a" stroke-width="1.2"/></svg>
<div class="a t" style="left:30px;top:748.5px;line-height:14px;font-size:12px;color:#a9a9a9;">Color</div>
<div class="a" style="left:178px;top:748px;width:92px;height:14px;background:#3aaef0;border-radius:3px"></div>
<div class="a" style="left:277px;top:747px;width:94px;height:16px;background:#2a2a2a;border-radius:3px"></div>
<div class="a t" style="left:282px;top:748.5px;line-height:14px;font-size:12px;color:#6a6a6a;">#</div>
<div class="a t" style="left:294px;top:748.5px;line-height:14px;font-size:12px;color:#dedede;">3aaef0</div>
<div class="a" style="left:377px;top:747px;width:94px;height:16px;background:#2a2a2a;border-radius:3px"></div>
<div class="a t" style="left:382px;top:748.5px;line-height:14px;font-size:12px;color:#6a6a6a;">A</div>
<div class="a t" style="left:394px;top:748.5px;line-height:14px;font-size:12px;color:#dedede;">255</div>
<div class="a" style="left:177px;top:766px;width:94px;height:16px;background:#2a2a2a;border-radius:3px"></div>
<div class="a t" style="left:182px;top:767.5px;line-height:14px;font-size:12px;color:#555;">R</div>
<div class="a t" style="left:194px;top:767.5px;line-height:14px;font-size:12px;color:#c8c8c8;">58</div>
<div class="a" style="left:277px;top:766px;width:94px;height:16px;background:#2a2a2a;border-radius:3px"></div>
<div class="a t" style="left:282px;top:767.5px;line-height:14px;font-size:12px;color:#555;">G</div>
<div class="a t" style="left:294px;top:767.5px;line-height:14px;font-size:12px;color:#c8c8c8;">174</div>
<div class="a" style="left:377px;top:766px;width:94px;height:16px;background:#2a2a2a;border-radius:3px"></div>
<div class="a t" style="left:382px;top:767.5px;line-height:14px;font-size:12px;color:#555;">B</div>
<div class="a t" style="left:394px;top:767.5px;line-height:14px;font-size:12px;color:#c8c8c8;">240</div>
<svg class="a" style="left:13px;top:791px;" width="12" height="12" viewBox="0 0 12 12"><circle cx="6" cy="6" r="4.3" fill="none" stroke="#8a8a8a" stroke-width="1.2"/></svg>
<div class="a t" style="left:30px;top:790.5px;line-height:14px;font-size:12px;color:#e0e0e0;">Enabled</div>
<div class="a" style="left:177px;top:789px;width:16px;height:16px;background:#2a2a2a;border-radius:3px"></div>
<svg class="a" style="left:177px;top:789px;" width="16" height="16" viewBox="0 0 16 16"><path d="M3.5 8.5 L6.8 11.8 L12.8 4" fill="none" stroke="#33c766" stroke-width="2"/></svg>
<div class="a" style="left:494px;top:85px;width:30px;height:546px;background:#464646;"></div>
<div class="a" style="left:504px;top:89px;width:2px;height:2px;background:#8a8a8a;"></div>
<div class="a" style="left:508px;top:89px;width:2px;height:2px;background:#8a8a8a;"></div>
<div class="a" style="left:512px;top:89px;width:2px;height:2px;background:#8a8a8a;"></div>
<div class="a" style="left:495px;top:96px;width:28px;height:28px;background:#151515;border-radius:4px"></div>
<svg class="a" style="left:495px;top:95px;" width="28" height="28" viewBox="0 0 28 28"><path d="M9 6 L9 21 L12.5 17.5 L15 23 L17.5 22 L15 16.5 L20 16.5 Z" fill="none" stroke="#35c75a" stroke-width="1.4" stroke-linejoin="round"/></svg>
<svg class="a" style="left:495px;top:126px;" width="28" height="28" viewBox="0 0 28 28"><path d="M9 5 L9 23 L21 14 Z" fill="#e0e0e0"/></svg>
<svg class="a" style="left:495px;top:156px;" width="28" height="28" viewBox="0 0 28 28"><path d="M6 6.5 L15.5 9.5 L20 14 L14 20 L9.5 15.5 Z" fill="#dcdcdc"/><path d="M6.5 7 L12 12.5" stroke="#555" stroke-width="0.9"/><circle cx="12.8" cy="13" r="1.3" fill="#444"/><path d="M18 18 L22 22" stroke="#dcdcdc" stroke-width="3.2"/></svg>
<svg class="a" style="left:495px;top:185px;" width="28" height="28" viewBox="0 0 28 28"><path d="M9 19.5 L20.5 8" stroke="#dcdcdc" stroke-width="3.8" stroke-linecap="round"/><path d="M5.5 23.5 L6.8 18.7 L10.2 22.1 Z" fill="#dcdcdc"/><path d="M8 21 L6 23" stroke="#888" stroke-width="0.8"/></svg>
<svg class="a" style="left:495px;top:215px;" width="28" height="28" viewBox="0 0 28 28"><rect x="5" y="11" width="13" height="10" rx="1.5" fill="#e0e0e0"/><rect x="8" y="8.5" width="6" height="2" fill="#e0e0e0"/><path d="M18 16 L24 11.5 V20.5 Z" fill="#e0e0e0"/><circle cx="8" cy="13.5" r="1" fill="#333"/></svg>
<svg class="a" style="left:495px;top:245px;" width="28" height="28" viewBox="0 0 28 28"><path d="M7 21 L22 7" stroke="#ddd" stroke-width="1.3"/></svg>
<svg class="a" style="left:495px;top:275px;" width="28" height="28" viewBox="0 0 28 28"><path d="M7 7 H21 V11 H16.5 V22 H11.5 V11 H7 Z" fill="#e6e6e6"/></svg>
<svg class="a" style="left:495px;top:305px;" width="28" height="28" viewBox="0 0 28 28"><path d="M7.5 23 L9.5 9 L20 7.5 L22.5 23 Z" fill="none" stroke="#ccc" stroke-width="1" stroke-dasharray="2.2 1.8"/><circle cx="7.5" cy="23" r="1.3" fill="#eee"/><circle cx="22.5" cy="23" r="1.3" fill="#eee"/><circle cx="20" cy="7.5" r="1.3" fill="#eee"/><path d="M6 6 L6 16 L9 13 L14.5 12.5 Z" fill="#e6e6e6"/></svg>
<svg class="a" style="left:495px;top:336px;" width="28" height="28" viewBox="0 0 28 28"><rect x="7" y="7" width="14" height="14" fill="#e6e6e6"/></svg>
<svg class="a" style="left:495px;top:366px;" width="28" height="28" viewBox="0 0 28 28"><circle cx="14" cy="14" r="8" fill="#e6e6e6"/></svg>
<svg class="a" style="left:495px;top:395px;" width="28" height="28" viewBox="0 0 28 28"><path d="M14 6 L22 12 L19 22 H9 L6 12 Z" fill="#e6e6e6"/></svg>
<svg class="a" style="left:495px;top:425px;" width="28" height="28" viewBox="0 0 28 28"><path d="M14 5 L16.6 11.2 L23.3 11.8 L18.2 16.2 L19.8 22.8 L14 19.3 L8.2 22.8 L9.8 16.2 L4.7 11.8 L11.4 11.2 Z" fill="#e6e6e6"/></svg>
<svg class="a" style="left:495px;top:455px;" width="28" height="28" viewBox="0 0 28 28"><path d="M8.5 18 A6.5 6.5 0 1 1 20 14" fill="none" stroke="#e6e6e6" stroke-width="3"/></svg>
<svg class="a" style="left:495px;top:485px;" width="28" height="28" viewBox="0 0 28 28"><path d="M14 5 Q15 13 23 14 Q15 15 14 23 Q13 15 5 14 Q13 13 14 5Z" fill="#e6e6e6"/></svg>
<svg class="a" style="left:495px;top:515px;" width="28" height="28" viewBox="0 0 28 28"><circle cx="14" cy="14" r="7" fill="#e6e6e6"/><rect x="12" y="4.5" width="4" height="5" fill="#e6e6e6" transform="rotate(0 14 14)"/><rect x="12" y="4.5" width="4" height="5" fill="#e6e6e6" transform="rotate(45 14 14)"/><rect x="12" y="4.5" width="4" height="5" fill="#e6e6e6" transform="rotate(90 14 14)"/><rect x="12" y="4.5" width="4" height="5" fill="#e6e6e6" transform="rotate(135 14 14)"/><rect x="12" y="4.5" width="4" height="5" fill="#e6e6e6" transform="rotate(180 14 14)"/><rect x="12" y="4.5" width="4" height="5" fill="#e6e6e6" transform="rotate(225 14 14)"/><rect x="12" y="4.5" width="4" height="5" fill="#e6e6e6" transform="rotate(270 14 14)"/><rect x="12" y="4.5" width="4" height="5" fill="#e6e6e6" transform="rotate(315 14 14)"/><circle cx="14" cy="14" r="2.8" fill="#464646"/></svg>
<svg class="a" style="left:495px;top:545px;" width="28" height="28" viewBox="0 0 28 28"><path d="M5 14 L10 9 V12 H18 V9 L23 14 L18 19 V16 H10 V19 Z" fill="#e6e6e6"/></svg>
<svg class="a" style="left:495px;top:575px;" width="28" height="28" viewBox="0 0 28 28"><rect x="5" y="10.5" width="18" height="7" rx="3.5" fill="#e6e6e6"/></svg>
<div class="a" style="left:530px;top:85px;width:1057px;height:22px;background:#1e1e1e;"></div>
<div class="a" style="left:530px;top:85px;width:87px;height:22px;background:#464646;border-radius:5px 5px 0 0"></div>
<div class="a t" style="left:535px;top:90.0px;line-height:14px;font-size:12px;color:#dcdcdc;">Composition 1</div>
<div class="a" style="left:530px;top:107px;width:1057px;height:20px;background:#484848;"></div>
<div class="a" style="left:530px;top:127px;width:20px;height:482px;background:#484848;"></div>
<div class="a t" style="left:536px;top:110.5px;line-height:14px;font-size:11px;color:#a8a8a8;">px</div>
<div class="a" style="left:550px;top:127px;width:1037px;height:482px;background:#000;"></div>
<svg class="a" style="left:530px;top:107px;" width="1057" height="20" viewBox="0 0 1057 20"></svg>
<svg class="a" style="left:0;top:0" width="1920" height="1029"><path d="M561.5 119V127 M574.5 123V127 M586.5 123V127 M599.5 123V127 M612.5 123V127 M624.5 119V127 M637.5 123V127 M650.5 123V127 M662.5 123V127 M675.5 123V127 M688.5 119V127 M700.5 123V127 M713.5 123V127 M726.5 123V127 M738.5 123V127 M751.5 119V127 M764.5 123V127 M776.5 123V127 M789.5 123V127 M802.5 123V127 M814.5 119V127 M827.5 123V127 M840.5 123V127 M852.5 123V127 M865.5 123V127 M878.5 119V127 M890.5 123V127 M903.5 123V127 M916.5 123V127 M928.5 123V127 M941.5 119V127 M954.5 123V127 M966.5 123V127 M979.5 123V127 M992.5 123V127 M1004.5 119V127 M1017.5 123V127 M1030.5 123V127 M1042.5 123V127 M1055.5 123V127 M1068.5 119V127 M1080.5 123V127 M1093.5 123V127 M1106.5 123V127 M1118.5 123V127 M1131.5 119V127 M1144.5 123V127 M1156.5 123V127 M1169.5 123V127 M1182.5 123V127 M1194.5 119V127 M1207.5 123V127 M1220.5 123V127 M1232.5 123V127 M1245.5 123V127 M1258.5 119V127 M1270.5 123V127 M1283.5 123V127 M1296.5 123V127 M1308.5 123V127 M1321.5 119V127 M1334.5 123V127 M1346.5 123V127 M1359.5 123V127 M1372.5 123V127 M1384.5 119V127 M1397.5 123V127 M1410.5 123V127 M1422.5 123V127 M1435.5 123V127 M1448.5 119V127 M1460.5 123V127 M1473.5 123V127 M1486.5 123V127 M1498.5 123V127 M1511.5 119V127 M1524.5 123V127 M1536.5 123V127 M1549.5 123V127 M1562.5 123V127 M1574.5 119V127" stroke="#9a9a9a" stroke-width="1"/></svg>
<div class="a t" style="left:594.99px;top:108.0px;width:60px;text-align:center;line-height:14px;font-size:11px;color:#b4b4b4;">-1050</div>
<div class="a t" style="left:658.3199999999999px;top:108.0px;width:60px;text-align:center;line-height:14px;font-size:11px;color:#b4b4b4;">-900</div>
<div class="a t" style="left:721.65px;top:108.0px;width:60px;text-align:center;line-height:14px;font-size:11px;color:#b4b4b4;">-750</div>
<div class="a t" style="left:784.98px;top:108.0px;width:60px;text-align:center;line-height:14px;font-size:11px;color:#b4b4b4;">-600</div>
<div class="a t" style="left:848.31px;top:108.0px;width:60px;text-align:center;line-height:14px;font-size:11px;color:#b4b4b4;">-450</div>
<div class="a t" style="left:911.64px;top:108.0px;width:60px;text-align:center;line-height:14px;font-size:11px;color:#b4b4b4;">-300</div>
<div class="a t" style="left:974.9699999999999px;top:108.0px;width:60px;text-align:center;line-height:14px;font-size:11px;color:#b4b4b4;">-150</div>
<div class="a t" style="left:1038.3px;top:108.0px;width:60px;text-align:center;line-height:14px;font-size:11px;color:#b4b4b4;">0</div>
<div class="a t" style="left:1101.6299999999999px;top:108.0px;width:60px;text-align:center;line-height:14px;font-size:11px;color:#b4b4b4;">150</div>
<div class="a t" style="left:1164.96px;top:108.0px;width:60px;text-align:center;line-height:14px;font-size:11px;color:#b4b4b4;">300</div>
<div class="a t" style="left:1228.29px;top:108.0px;width:60px;text-align:center;line-height:14px;font-size:11px;color:#b4b4b4;">450</div>
<div class="a t" style="left:1291.62px;top:108.0px;width:60px;text-align:center;line-height:14px;font-size:11px;color:#b4b4b4;">600</div>
<div class="a t" style="left:1354.9499999999998px;top:108.0px;width:60px;text-align:center;line-height:14px;font-size:11px;color:#b4b4b4;">750</div>
<div class="a t" style="left:1418.28px;top:108.0px;width:60px;text-align:center;line-height:14px;font-size:11px;color:#b4b4b4;">900</div>
<div class="a t" style="left:1481.61px;top:108.0px;width:60px;text-align:center;line-height:14px;font-size:11px;color:#b4b4b4;">1050</div>
<div class="a t" style="left:1544.94px;top:108.0px;width:60px;text-align:center;line-height:14px;font-size:11px;color:#b4b4b4;">1200</div>
<svg class="a" style="left:0;top:0" width="1920" height="1029"><path d="M546 139.5H550 M546 152.5H550 M546 164.5H550 M542 177.5H550 M546 190.5H550 M546 202.5H550 M546 215.5H550 M546 228.5H550 M542 240.5H550 M546 253.5H550 M546 266.5H550 M546 278.5H550 M546 291.5H550 M542 304.5H550 M546 316.5H550 M546 329.5H550 M546 342.5H550 M546 354.5H550 M542 367.5H550 M546 380.5H550 M546 392.5H550 M546 405.5H550 M546 418.5H550 M542 430.5H550 M546 443.5H550 M546 456.5H550 M546 468.5H550 M546 481.5H550 M542 494.5H550 M546 506.5H550 M546 519.5H550 M546 532.5H550 M546 544.5H550 M542 557.5H550 M546 570.5H550 M546 582.5H550 M546 595.5H550 M546 608.5H550" stroke="#7a7a7a" stroke-width="1"/></svg>
<div class="a t" style="left:508px;top:550.49px;width:60px;height:14px;line-height:14px;text-align:center;font-size:11px;color:#b4b4b4;transform:rotate(-90deg)">-450</div>
<div class="a t" style="left:508px;top:487.15999999999997px;width:60px;height:14px;line-height:14px;text-align:center;font-size:11px;color:#b4b4b4;transform:rotate(-90deg)">-300</div>
<div class="a t" style="left:508px;top:423.83px;width:60px;height:14px;line-height:14px;text-align:center;font-size:11px;color:#b4b4b4;transform:rotate(-90deg)">-150</div>
<div class="a t" style="left:508px;top:360.5px;width:60px;height:14px;line-height:14px;text-align:center;font-size:11px;color:#b4b4b4;transform:rotate(-90deg)">0</div>
<div class="a t" style="left:508px;top:297.17px;width:60px;height:14px;line-height:14px;text-align:center;font-size:11px;color:#b4b4b4;transform:rotate(-90deg)">150</div>
<div class="a t" style="left:508px;top:233.84px;width:60px;height:14px;line-height:14px;text-align:center;font-size:11px;color:#b4b4b4;transform:rotate(-90deg)">300</div>
<div class="a t" style="left:508px;top:170.51px;width:60px;height:14px;line-height:14px;text-align:center;font-size:11px;color:#b4b4b4;transform:rotate(-90deg)">450</div>
<div class="a" style="left:662px;top:140px;width:811px;height:456px;background:#ffffff;"></div>
<svg class="a" style="left:850px;top:120px;" width="440" height="450" viewBox="0 0 440 450"><circle cx="218" cy="227" r="211" fill="none" stroke="#3a6fe0" stroke-width="2.2" stroke-dasharray="0.1 4.2" stroke-linecap="round"/><rect x="7.5" y="16.5" width="422" height="422" fill="none" stroke="#6bd69a" stroke-width="1.2"/><rect x="4.5" y="13.5" width="6" height="6" fill="#fff" stroke="#6bd69a" stroke-width="1.2"/><rect x="426.5" y="13.5" width="6" height="6" fill="#fff" stroke="#6bd69a" stroke-width="1.2"/><rect x="4.5" y="435.5" width="6" height="6" fill="#fff" stroke="#6bd69a" stroke-width="1.2"/><rect x="426.5" y="435.5" width="6" height="6" fill="#fff" stroke="#6bd69a" stroke-width="1.2"/></svg>
<div class="a" style="left:857px;top:127px;width:9px;height:2px;background:#5b86e5;"></div>
<div class="a t" style="left:869px;top:127px;height:6px;width:200px;overflow:hidden;font-size:12px;line-height:14px;color:#e6e6e6"><div style="margin-top:-8.5px">Falloff [Sub-Mesh [Jumping Text]]</div></div>
<svg class="a" style="left:0;top:0" width="1920" height="1029"><g font-family="Liberation Sans" font-weight="bold" font-size="100" fill="#656565"><text transform="matrix(0.5766 0 0 0.5600 873.75 400.04)">J</text><text transform="matrix(0.6292 0 0 0.5611 903.62 392.74)">u</text><text transform="matrix(0.6605 0 0 0.5519 940.38 375.80)">m</text><text transform="matrix(0.6560 0 0 0.5440 997.41 363.38)">p</text><text transform="matrix(0.7214 0 0 0.6014 1034.45 362.80)">i</text><text transform="matrix(0.6292 0 0 0.5519 1052.50 362.80)">n</text><text transform="matrix(0.6120 0 0 0.5480 1089.45 362.59)">g</text><text transform="matrix(0.5678 0 0 0.5638 1141.63 364.90)">T</text><text transform="matrix(0.6396 0 0 0.5527 1171.14 368.65)">e</text><text transform="matrix(0.6074 0 0 0.5604 1203.79 379.70)">x</text><text transform="matrix(0.7129 0 0 0.5621 1237.59 394.44)">t</text></g></svg>
<svg class="a" style="left:1038px;top:317px;" width="60" height="60" viewBox="0 0 60 60"><path d="M4.3 30.3H57" stroke="#4a7cf0" stroke-width="1.6" stroke-dasharray="1.1 2.9"/><path d="M30.2 4.3V56.4" stroke="#4a7cf0" stroke-width="1.6" stroke-dasharray="1.1 2.9"/><circle cx="30.2" cy="30.3" r="4" fill="none" stroke="#222" stroke-width="1"/></svg>
<div class="a t" style="left:569px;top:511.5px;line-height:14px;font-size:12px;letter-spacing:-0.35px;color:#f4f4f4;text-shadow:0 0 1px #000,0 0 1px #000">Hold S <span style="color:rgba(150,150,150,0.6);text-shadow:none">Direct Layer Selection</span></div>
<div class="a t" style="left:569px;top:525.5px;line-height:14px;font-size:12px;letter-spacing:-0.35px;color:#f4f4f4;text-shadow:0 0 1px #000,0 0 1px #000">Space <span style="color:rgba(150,150,150,0.6);text-shadow:none">Play/ Stop</span></div>
<div class="a t" style="left:569px;top:539.5px;line-height:14px;font-size:12px;letter-spacing:-0.35px;color:#f4f4f4;text-shadow:0 0 1px #000,0 0 1px #000">Space + click + drag <span style="color:rgba(150,150,150,0.6);text-shadow:none">Pan</span></div>
<div class="a t" style="left:569px;top:553.5px;line-height:14px;font-size:12px;letter-spacing:-0.35px;color:#f4f4f4;text-shadow:0 0 1px #000,0 0 1px #000">Alt + click + drag <span style="color:rgba(150,150,150,0.6);text-shadow:none">Move Pivot Point</span></div>
<div class="a t" style="left:569px;top:567.5px;line-height:14px;font-size:12px;letter-spacing:-0.35px;color:#f4f4f4;text-shadow:0 0 1px #000,0 0 1px #000">Shift <span style="color:rgba(150,150,150,0.6);text-shadow:none">Enable Snapping</span></div>
<div class="a t" style="left:569px;top:587.5px;line-height:14px;font-size:12px;color:#f4f4f4;letter-spacing:-0.2px">00:00:00:00</div>
<div class="a t" style="left:998px;top:587.5px;line-height:14px;font-size:12px;color:#111;text-shadow:0 0 1px #fff,0 0 1px #fff,0 0 2px #fff">Viewport Quality: High</div>
<div class="a" style="left:530px;top:609px;width:1057px;height:22px;background:#464646;"></div>
<div class="a" style="left:535px;top:612px;width:78px;height:16px;background:#2c2c2c;border-radius:3px"></div>
<div class="a t" style="left:538px;top:614.0px;line-height:14px;font-size:12px;color:#e0e0e0;">42%</div>
<svg class="a" style="left:597px;top:615px;" width="12" height="10" viewBox="0 0 12 10"><path d="M2 3 L6 7 L10 3" fill="none" stroke="#cfcfcf" stroke-width="1"/></svg>
<div class="a" style="left:866px;top:611px;width:100px;height:19px;background:#2a2a2a;border-radius:4px;border:1px solid #222"></div>
<svg class="a" style="left:866px;top:611px;" width="20" height="19" viewBox="0 0 20 19"><rect x="5" y="5" width="1.6" height="10" fill="#d0d0d0"/><path d="M15 5 L7.5 10 L15 15Z" fill="#d0d0d0"/></svg>
<svg class="a" style="left:886px;top:611px;" width="20" height="19" viewBox="0 0 20 19"><path d="M12 5 L4.5 10 L12 15Z" fill="#d0d0d0"/><rect x="13.5" y="5" width="1.6" height="10" fill="#d0d0d0"/></svg>
<div class="a" style="left:886px;top:612px;width:1px;height:17px;background:#3a3a3a;"></div>
<svg class="a" style="left:906px;top:611px;" width="20" height="19" viewBox="0 0 20 19"><path d="M6 5 L14 10 L6 15Z" fill="#d0d0d0"/></svg>
<div class="a" style="left:906px;top:612px;width:1px;height:17px;background:#3a3a3a;"></div>
<svg class="a" style="left:926px;top:611px;" width="20" height="19" viewBox="0 0 20 19"><rect x="5" y="5" width="1.6" height="10" fill="#d0d0d0"/><path d="M8 5 L15.5 10 L8 15Z" fill="#d0d0d0"/></svg>
<div class="a" style="left:926px;top:612px;width:1px;height:17px;background:#3a3a3a;"></div>
<svg class="a" style="left:946px;top:611px;" width="20" height="19" viewBox="0 0 20 19"><path d="M5 5 L12.5 10 L5 15Z" fill="#d0d0d0"/><rect x="13.5" y="5" width="1.6" height="10" fill="#d0d0d0"/></svg>
<div class="a" style="left:946px;top:612px;width:1px;height:17px;background:#3a3a3a;"></div>
<div class="a" style="left:972px;top:611px;width:19px;height:19px;background:#2a2a2a;border-radius:4px;border:1px solid #222"></div>
<svg class="a" style="left:972px;top:611px;" width="19" height="19" viewBox="0 0 19 19"><path d="M8 7 H4.5 V14.5 H14.5 V10" fill="none" stroke="#d0d0d0" stroke-width="1.2"/><path d="M11 4 L16 7 L11 10Z" fill="#d0d0d0"/></svg>
<div class="a" style="left:1232px;top:611px;width:37px;height:19px;background:#2c2c2c;border-radius:3px"></div>
<svg class="a" style="left:1234px;top:614px;" width="14" height="12" viewBox="0 0 14 12"><path d="M1 6 L4 2 H13 V10 H4Z" fill="#ddd"/><circle cx="5" cy="6" r="1.3" fill="#333"/></svg>
<div class="a t" style="left:1257px;top:614.0px;line-height:14px;font-size:12px;color:#8a8a8a;">0</div>
<div class="a" style="left:1273px;top:611px;width:31px;height:19px;background:#2c2c2c;border-radius:3px"></div>
<svg class="a" style="left:1273px;top:611px;" width="20" height="19" viewBox="0 0 20 19"><path d="M3 8 H6 L10 4.5 V14.5 L6 11 H3Z" fill="#3ec46d"/><path d="M12 7 Q14 9.5 12 12 M14 5 Q17.5 9.5 14 14" fill="none" stroke="#3ec46d" stroke-width="1.2"/></svg>
<svg class="a" style="left:1293px;top:611px;" width="11" height="19" viewBox="0 0 11 19"><path d="M2.5 6 L7.5 9.5 L2.5 13Z" fill="none" stroke="#999" stroke-width="1"/></svg>
<div class="a" style="left:1307px;top:611px;width:31px;height:19px;background:#2c2c2c;border-radius:3px"></div>
<svg class="a" style="left:1307px;top:611px;" width="20" height="19" viewBox="0 0 20 19"><path d="M5 14 V9 A5 5 0 0 1 15 9 V10" fill="none" stroke="#ddd" stroke-width="2.5"/></svg>
<svg class="a" style="left:1327px;top:611px;" width="11" height="19" viewBox="0 0 11 19"><path d="M2.5 6 L7.5 9.5 L2.5 13Z" fill="none" stroke="#999" stroke-width="1"/></svg>
<div class="a" style="left:1342px;top:611px;width:31px;height:19px;background:#2c2c2c;border-radius:3px"></div>
<svg class="a" style="left:1342px;top:611px;" width="20" height="19" viewBox="0 0 20 19"><path d="M4 7.5H16M4 11.5H16M7.5 4V15M11.5 4V15" stroke="#ddd" stroke-width="1.2"/></svg>
<svg class="a" style="left:1362px;top:611px;" width="11" height="19" viewBox="0 0 11 19"><path d="M2.5 6 L7.5 9.5 L2.5 13Z" fill="none" stroke="#999" stroke-width="1"/></svg>
<div class="a" style="left:1377px;top:611px;width:19px;height:19px;background:#2c2c2c;border-radius:3px"></div>
<svg class="a" style="left:1377px;top:611px;" width="20" height="19" viewBox="0 0 20 19"><rect x="2" y="4" width="4" height="11" fill="#3ec46d"/><rect x="7" y="5" width="9" height="3" fill="#3ec46d"/><rect x="7" y="10" width="9" height="3" fill="#3ec46d"/></svg>
<div class="a" style="left:1400px;top:611px;width:20px;height:19px;background:#2c2c2c;border-radius:3px"></div>
<svg class="a" style="left:1400px;top:611px;" width="20" height="19" viewBox="0 0 20 19"><path d="M3 5 L7 9.5 L3 14 M7.5 5 L11.5 9.5 L7.5 14 M12 5 L16 9.5 L12 14" fill="none" stroke="#ddd" stroke-width="1.5"/></svg>
<div class="a" style="left:1423px;top:611px;width:32px;height:19px;background:#2c2c2c;border-radius:3px"></div>
<svg class="a" style="left:1423px;top:611px;" width="20" height="19" viewBox="0 0 20 19"><rect x="3" y="4.5" width="14" height="9" fill="none" stroke="#ddd" stroke-width="1.5"/><rect x="2" y="13" width="16" height="2" fill="#ddd"/></svg>
<svg class="a" style="left:1444px;top:611px;" width="11" height="19" viewBox="0 0 11 19"><path d="M2.5 6 L7.5 9.5 L2.5 13Z" fill="none" stroke="#999" stroke-width="1"/></svg>
<div class="a" style="left:1458px;top:611px;width:32px;height:19px;background:#2c2c2c;border-radius:3px"></div>
<svg class="a" style="left:1458px;top:611px;" width="20" height="19" viewBox="0 0 20 19"><rect x="3" y="4" width="9" height="7" fill="none" stroke="#ccc" stroke-width="1"/><rect x="5.5" y="6.5" width="9" height="7" fill="#2c2c2c" stroke="#ccc" stroke-width="1"/><path d="M8 15.5 H17 V9" fill="none" stroke="#ccc" stroke-width="1"/></svg>
<svg class="a" style="left:1479px;top:611px;" width="11" height="19" viewBox="0 0 11 19"><path d="M2.5 6 L7.5 9.5 L2.5 13Z" fill="none" stroke="#999" stroke-width="1"/></svg>
<div class="a" style="left:1494px;top:611px;width:32px;height:19px;background:#2c2c2c;border-radius:3px"></div>
<svg class="a" style="left:1494px;top:611px;" width="20" height="19" viewBox="0 0 20 19"><rect x="3" y="4" width="9" height="8" fill="#ccc"/><rect x="7" y="8" width="9" height="8" fill="#2c2c2c" stroke="#ddd" stroke-width="1.2"/></svg>
<svg class="a" style="left:1515px;top:611px;" width="11" height="19" viewBox="0 0 11 19"><path d="M2.5 6 L7.5 9.5 L2.5 13Z" fill="none" stroke="#999" stroke-width="1"/></svg>
<div class="a" style="left:1529px;top:611px;width:32px;height:19px;background:#2c2c2c;border-radius:3px"></div>
<svg class="a" style="left:1529px;top:611px;" width="20" height="19" viewBox="0 0 20 19"><rect x="3.0" y="3.0" width="2.5" height="2.5" fill="#3ec46d"/><rect x="3.0" y="8.0" width="2.5" height="2.5" fill="#3ec46d"/><rect x="3.0" y="13.0" width="2.5" height="2.5" fill="#3ec46d"/><rect x="5.5" y="5.5" width="2.5" height="2.5" fill="#3ec46d"/><rect x="5.5" y="10.5" width="2.5" height="2.5" fill="#3ec46d"/><rect x="5.5" y="15.5" width="2.5" height="2.5" fill="#3ec46d"/><rect x="8.0" y="3.0" width="2.5" height="2.5" fill="#3ec46d"/><rect x="8.0" y="8.0" width="2.5" height="2.5" fill="#3ec46d"/><rect x="8.0" y="13.0" width="2.5" height="2.5" fill="#3ec46d"/><rect x="10.5" y="5.5" width="2.5" height="2.5" fill="#3ec46d"/><rect x="10.5" y="10.5" width="2.5" height="2.5" fill="#3ec46d"/><rect x="10.5" y="15.5" width="2.5" height="2.5" fill="#3ec46d"/><rect x="13.0" y="3.0" width="2.5" height="2.5" fill="#3ec46d"/><rect x="13.0" y="8.0" width="2.5" height="2.5" fill="#3ec46d"/><rect x="13.0" y="13.0" width="2.5" height="2.5" fill="#3ec46d"/><rect x="15.5" y="5.5" width="2.5" height="2.5" fill="#3ec46d"/><rect x="15.5" y="10.5" width="2.5" height="2.5" fill="#3ec46d"/><rect x="15.5" y="15.5" width="2.5" height="2.5" fill="#3ec46d"/></svg>
<svg class="a" style="left:1550px;top:611px;" width="11" height="19" viewBox="0 0 11 19"><path d="M2.5 6 L7.5 9.5 L2.5 13Z" fill="none" stroke="#999" stroke-width="1"/></svg>
<div class="a" style="left:1564px;top:611px;width:20px;height:19px;background:#2c2c2c;border-radius:3px"></div>
<svg class="a" style="left:1564px;top:611px;" width="20" height="19" viewBox="0 0 20 19"><circle cx="10" cy="9.5" r="5" fill="#ddd"/><rect x="8.6" y="2.8" width="2.8" height="3.5" fill="#ddd" transform="rotate(0 10 9.5)"/><rect x="8.6" y="2.8" width="2.8" height="3.5" fill="#ddd" transform="rotate(45 10 9.5)"/><rect x="8.6" y="2.8" width="2.8" height="3.5" fill="#ddd" transform="rotate(90 10 9.5)"/><rect x="8.6" y="2.8" width="2.8" height="3.5" fill="#ddd" transform="rotate(135 10 9.5)"/><rect x="8.6" y="2.8" width="2.8" height="3.5" fill="#ddd" transform="rotate(180 10 9.5)"/><rect x="8.6" y="2.8" width="2.8" height="3.5" fill="#ddd" transform="rotate(225 10 9.5)"/><rect x="8.6" y="2.8" width="2.8" height="3.5" fill="#ddd" transform="rotate(270 10 9.5)"/><rect x="8.6" y="2.8" width="2.8" height="3.5" fill="#ddd" transform="rotate(315 10 9.5)"/><circle cx="10" cy="9.5" r="2" fill="#2c2c2c"/></svg>
<div class="a" style="left:1593px;top:85px;width:321px;height:22px;background:#1e1e1e;"></div>
<div class="a" style="left:1593px;top:85px;width:40px;height:22px;background:#464646;border-radius:5px 5px 0 0"></div>
<div class="a t" style="left:1598px;top:90.0px;line-height:14px;font-size:12px;color:#dcdcdc;">Color</div>
<div class="a" style="left:1633px;top:85px;width:68px;height:22px;background:#262626;border-radius:5px 5px 0 0"></div>
<div class="a t" style="left:1639px;top:90.0px;line-height:14px;font-size:12px;color:#dcdcdc;">Add Layers</div>
<div class="a" style="left:1593px;top:107px;width:321px;height:428px;background:#464646;"></div>
<div class="a" style="left:1900px;top:107px;width:14px;height:428px;background:#2a2a2a;"></div>
<div class="a" style="left:1902px;top:108px;width:10px;height:387px;background:#505050;border-radius:5px"></div>
<div class="a" style="left:1645.6px;top:119.7px;width:200px;height:200px;border-radius:50%;background:conic-gradient(from 0deg,hsl(90,100%,50%),hsl(60,100%,50%) 30deg,hsl(30,100%,50%) 60deg,hsl(0,100%,50%) 90deg,hsl(330,100%,50%) 120deg,hsl(300,100%,50%) 150deg,hsl(270,100%,50%) 180deg,hsl(240,100%,50%) 210deg,hsl(210,100%,50%) 240deg,hsl(180,100%,50%) 270deg,hsl(150,100%,50%) 300deg,hsl(120,100%,50%) 330deg,hsl(90,100%,50%) 360deg)"></div>
<div class="a" style="left:1671.1px;top:145.2px;width:149px;height:149px;border-radius:50%;background:#464646"></div>
<div class="a" style="left:1702px;top:176px;width:90px;height:90px;background:linear-gradient(to right,#000,rgba(0,0,0,0)),linear-gradient(to bottom,#fff,#f00)"></div>
<svg class="a" style="left:1735px;top:166px;" width="20" height="20" viewBox="0 0 20 20"><circle cx="10" cy="10" r="5.8" fill="none" stroke="#e8e8e8" stroke-width="1.2"/></svg>
<svg class="a" style="left:1822.5px;top:209.7px;" width="20" height="20" viewBox="0 0 20 20"><circle cx="10" cy="10" r="6" fill="none" stroke="#f0f0f0" stroke-width="1.2"/></svg>
<div class="a" style="left:1600px;top:333px;width:22px;height:22px;background:#7a7a7a;border-radius:4px"></div>
<div class="a t" style="left:1625px;top:338.0px;line-height:14px;font-size:12px;color:#e0e0e0;">Gray</div>
<div class="a" style="left:1871px;top:333px;width:22px;height:21px;background:#2a2a2a;border-radius:4px;border:1px solid #222"></div>
<svg class="a" style="left:1871px;top:333px;" width="22" height="21" viewBox="0 0 22 21"><path d="M6 16 L13 9" stroke="#ccc" stroke-width="2.4"/><path d="M6.5 15.5 L12.5 9.5" stroke="#2a2a2a" stroke-width="0.9"/><path d="M12 6.5 L15.5 10 M13 5.5 Q15 3 17 5 Q18.5 7 16 9" fill="#ddd" stroke="#ddd" stroke-width="2"/></svg>
<div class="a" style="left:1600px;top:360px;width:49px;height:17px;background:#3a3a3a;border-radius:3px;border:1px solid #2e2e2e"></div>
<div class="a t" style="left:1603px;top:362.5px;line-height:14px;font-size:12px;color:#e0e0e0;">Hex</div>
<svg class="a" style="left:1634px;top:363px;" width="12" height="10" viewBox="0 0 12 10"><path d="M2 3 L6 7 L10 3" fill="none" stroke="#cfcfcf" stroke-width="1"/></svg>
<div class="a" style="left:1653px;top:359px;width:240px;height:20px;background:#2a2a2a;border-radius:3px"></div>
<div class="a t" style="left:1657px;top:363.0px;line-height:14px;font-size:11px;color:#5a5a5a;">#</div>
<div class="a t" style="left:1670px;top:363.0px;line-height:14px;font-size:12px;color:#e0e0e0;">7a7a7a</div>
<div class="a" style="left:1600px;top:390px;width:236px;height:4px;background:#e0e0e0;border-radius:2px"></div>
<svg class="a" style="left:1827px;top:385px;" width="14" height="14" viewBox="0 0 14 14"><circle cx="7" cy="7" r="5.5" fill="#6fcfb0"/><circle cx="7" cy="7" r="2" fill="#4a9f85"/></svg>
<div class="a" style="left:1849px;top:384px;width:44px;height:16px;background:#2a2a2a;border-radius:3px"></div>
<div class="a t" style="left:1853px;top:385.5px;line-height:14px;font-size:12px;color:#5a5a5a;">A</div>
<div class="a t" style="left:1848px;top:385.5px;width:40px;text-align:right;line-height:14px;font-size:12px;color:#e0e0e0;">255</div>
<div class="a" style="left:1597px;top:406px;width:299px;height:22px;background:#262626;"></div>
<div class="a" style="left:1599px;top:408px;width:148px;height:20px;background:#464646;border-radius:4px 4px 0 0"></div>
<div class="a t" style="left:1599.0px;top:411.5px;width:148px;text-align:center;line-height:14px;font-size:12px;color:#e0e0e0;">Swatches</div>
<div class="a t" style="left:1746.0px;top:411.5px;width:148px;text-align:center;line-height:14px;font-size:12px;color:#c8c8c8;">Generator</div>
<div class="a" style="left:1598px;top:431px;width:257px;height:18px;background:#535353;border-radius:3px"></div>
<div class="a" style="left:1599.5px;top:432px;width:61.5px;height:16px;background:#262626;border-radius:3px"></div>
<svg class="a" style="left:1604px;top:434px;" width="14" height="12" viewBox="0 0 14 12"><path d="M2 1V11M5 1V11" stroke="#35c75a" stroke-width="1.6"/><path d="M8 1L11.5 11" stroke="#35c75a" stroke-width="1.6"/></svg>
<div class="a t" style="left:1620px;top:433.5px;line-height:14px;font-size:12px;color:#e6e6e6;">Library</div>
<svg class="a" style="left:1671px;top:434px;" width="14" height="12" viewBox="0 0 14 12"><rect x="1" y="3" width="11" height="8" fill="#ccc"/><rect x="1" y="1" width="5" height="2" fill="#ccc"/><path d="M3 5.5H10M3 8H10" stroke="#555" stroke-width="1"/></svg>
<div class="a t" style="left:1686px;top:433.5px;line-height:14px;font-size:12px;color:#e6e6e6;">Project</div>
<svg class="a" style="left:1738px;top:433px;" width="12" height="14" viewBox="0 0 12 14"><path d="M2 1.5H7.5L10.5 4.5V12.5H2Z" fill="none" stroke="#ccc" stroke-width="1.1"/></svg>
<div class="a t" style="left:1752px;top:433.5px;line-height:14px;font-size:12px;color:#e6e6e6;">Scene</div>
<svg class="a" style="left:1800px;top:433px;" width="14" height="14" viewBox="0 0 14 14"><path d="M7 1.5 A5.5 5.5 0 1 0 12.5 7 L7 12.5" fill="none" stroke="#ccc" stroke-width="1.2"/><path d="M12.5 7 L7 12.5 Q8 8 12.5 7Z" fill="#ccc"/></svg>
<div class="a t" style="left:1816px;top:433.5px;line-height:14px;font-size:12px;color:#e6e6e6;">Labels</div>
<div class="a" style="left:1858px;top:431px;width:37px;height:18px;background:#535353;border-radius:3px"></div>
<div class="a" style="left:1859px;top:432px;width:17px;height:16px;background:#262626;border-radius:3px"></div>
<svg class="a" style="left:1859px;top:432px;" width="17" height="16" viewBox="0 0 17 16"><rect x="4" y="3.5" width="3.5" height="3.5" fill="#35c75a"/><rect x="9.5" y="3.5" width="3.5" height="3.5" fill="#35c75a"/><rect x="4" y="9" width="3.5" height="3.5" fill="#35c75a"/><rect x="9.5" y="9" width="3.5" height="3.5" fill="#35c75a"/></svg>
<svg class="a" style="left:1877px;top:432px;" width="17" height="16" viewBox="0 0 17 16"><path d="M3.5 4.5H13.5M3.5 8H13.5M3.5 11.5H13.5" stroke="#ccc" stroke-width="1.2"/></svg>
<div class="a" style="left:1598px;top:452px;width:275px;height:17px;background:#4e4e4e;border-radius:3px"></div>
<div class="a t" style="left:1601px;top:454.5px;line-height:14px;font-size:12px;color:#e6e6e6;">new</div>
<svg class="a" style="left:1858px;top:456px;" width="12" height="10" viewBox="0 0 12 10"><path d="M2 3 L6 7 L10 3" fill="none" stroke="#cfcfcf" stroke-width="1"/></svg>
<div class="a" style="left:1880px;top:460px;width:2px;height:2px;background:#d0d0d0;"></div>
<div class="a" style="left:1885px;top:460px;width:2px;height:2px;background:#d0d0d0;"></div>
<div class="a" style="left:1890px;top:460px;width:2px;height:2px;background:#d0d0d0;"></div>
<div class="a" style="left:1597px;top:470px;width:298px;height:65px;background:#2a2a2a;"></div>
<div class="a" style="left:1600px;top:472px;width:18px;height:18px;background:#8b4ff5;border-radius:3px"></div>
<div class="a" style="left:1622px;top:472px;width:18px;height:18px;background:#4ba3f7;border-radius:3px"></div>
<div class="a" style="left:1644px;top:472px;width:18px;height:18px;background:#ff6f4a;border-radius:3px"></div>
<div class="a" style="left:1666px;top:472px;width:18px;height:18px;background:#4ef0a8;border-radius:3px"></div>
<div class="a" style="left:1688px;top:472px;width:18px;height:18px;background:#ff4b5c;border-radius:3px"></div>
<div class="a" style="left:1710px;top:472px;width:18px;height:18px;background:#ff4fc4;border-radius:3px"></div>
<div class="a" style="left:1732px;top:472px;width:18px;height:18px;background:#ffce4a;border-radius:3px"></div>
<div class="a" style="left:1754px;top:472px;width:18px;height:18px;background:#4269e0;border-radius:3px"></div>
<div class="a" style="left:1776px;top:472px;width:18px;height:18px;background:#5ce6d6;border-radius:3px"></div>
<div class="a" style="left:1798px;top:472px;width:18px;height:18px;background:#d97ad9;border-radius:3px"></div>
<div class="a" style="left:1820px;top:472px;width:18px;height:18px;background:#a8ea88;border-radius:3px"></div>
<div class="a" style="left:1842px;top:472px;width:18px;height:18px;background:#6a4ff5;border-radius:3px"></div>
<div class="a" style="left:1593px;top:535px;width:321px;height:7px;background:#161616;"></div>
<div class="a" style="left:1593px;top:542px;width:321px;height:21px;background:#1e1e1e;"></div>
<div class="a" style="left:1593px;top:542px;width:38px;height:21px;background:#464646;border-radius:5px 5px 0 0"></div>
<div class="a t" style="left:1598px;top:546.0px;line-height:14px;font-size:12px;color:#dcdcdc;">Align</div>
<div class="a" style="left:1593px;top:563px;width:321px;height:68px;background:#464646;"></div>
<div class="a t" style="left:1601px;top:576.0px;line-height:14px;font-size:12px;color:#e0e0e0;">Alignment</div>
<div class="a t" style="left:1601px;top:604.5px;line-height:14px;font-size:12px;color:#e0e0e0;">Distribution</div>
<div class="a" style="left:1790px;top:573px;width:53px;height:18px;background:#2a2a2a;border-radius:4px;border:1px solid #222"></div>
<svg class="a" style="left:1790px;top:573px;" width="17" height="18" viewBox="0 0 17 18"><path d="M3 3V15" stroke="#e6e6e6" stroke-width="1.4"/><rect x="5" y="6" width="6" height="1.8" fill="#e6e6e6"/><rect x="5" y="10" width="9" height="1.8" fill="#e6e6e6"/></svg>
<svg class="a" style="left:1808px;top:573px;" width="17" height="18" viewBox="0 0 17 18"><path d="M8.5 3V15" stroke="#e6e6e6" stroke-width="1.2"/><rect x="5" y="6" width="7" height="1.8" fill="#e6e6e6"/><rect x="3" y="10" width="11" height="1.8" fill="#e6e6e6"/></svg>
<div class="a" style="left:1807.5px;top:574px;width:1px;height:16px;background:#444;"></div>
<svg class="a" style="left:1826px;top:573px;" width="17" height="18" viewBox="0 0 17 18"><path d="M14 3V15" stroke="#e6e6e6" stroke-width="1.4"/><rect x="6" y="6" width="6" height="1.8" fill="#e6e6e6"/><rect x="3" y="10" width="9" height="1.8" fill="#e6e6e6"/></svg>
<div class="a" style="left:1825.5px;top:574px;width:1px;height:16px;background:#444;"></div>
<div class="a" style="left:1852px;top:573px;width:53px;height:18px;background:#2a2a2a;border-radius:4px;border:1px solid #222"></div>
<svg class="a" style="left:1852px;top:573px;" width="17" height="18" viewBox="0 0 17 18"><path d="M3 3H14" stroke="#e6e6e6" stroke-width="1.4"/><rect x="5" y="5" width="1.8" height="10" fill="#e6e6e6"/><rect x="9" y="5" width="1.8" height="6" fill="#e6e6e6"/></svg>
<svg class="a" style="left:1870px;top:573px;" width="17" height="18" viewBox="0 0 17 18"><path d="M3 9H14" stroke="#e6e6e6" stroke-width="1.2"/><rect x="5" y="4" width="1.8" height="10" fill="#e6e6e6"/><rect x="9" y="5" width="1.8" height="8" fill="#e6e6e6"/></svg>
<div class="a" style="left:1869.5px;top:574px;width:1px;height:16px;background:#444;"></div>
<svg class="a" style="left:1888px;top:573px;" width="17" height="18" viewBox="0 0 17 18"><path d="M3 15H14" stroke="#e6e6e6" stroke-width="1.4"/><rect x="5" y="4" width="1.8" height="9" fill="#e6e6e6"/><rect x="9" y="7" width="1.8" height="6" fill="#e6e6e6"/></svg>
<div class="a" style="left:1887.5px;top:574px;width:1px;height:16px;background:#444;"></div>
<div class="a" style="left:1790px;top:602px;width:53px;height:18px;background:#2a2a2a;border-radius:4px;border:1px solid #222"></div>
<svg class="a" style="left:1790px;top:602px;" width="17" height="18" viewBox="0 0 17 18"><path d="M4 3V15M13 3V15" stroke="#e6e6e6" stroke-width="1.3"/><rect x="7.5" y="5" width="2" height="8" fill="#e6e6e6"/></svg>
<svg class="a" style="left:1808px;top:602px;" width="17" height="18" viewBox="0 0 17 18"><path d="M3 4H14M3 14H14" stroke="#e6e6e6" stroke-width="1.3"/><rect x="5" y="8" width="7" height="2" fill="#e6e6e6"/></svg>
<div class="a" style="left:1807.5px;top:603px;width:1px;height:16px;background:#444;"></div>
<svg class="a" style="left:1826px;top:602px;" width="17" height="18" viewBox="0 0 17 18"><path d="M3 13 L3 15 L5 15 M12 3 L14 3 L14 5" fill="none" stroke="#e6e6e6" stroke-width="1"/><rect x="6" y="9" width="2" height="4" fill="#e6e6e6"/><rect x="10" y="6" width="2" height="4" fill="#e6e6e6"/></svg>
<div class="a" style="left:1825.5px;top:603px;width:1px;height:16px;background:#444;"></div>
<div class="a" style="left:1593px;top:631px;width:321px;height:6px;background:#1b1b1b;"></div>
<div class="a" style="left:494px;top:637px;width:1420px;height:24px;background:#1e1e1e;"></div>
<div class="a" style="left:494px;top:637px;width:89px;height:23px;background:#464646;border-radius:5px 5px 0 0"></div>
<div class="a t" style="left:500px;top:642.0px;line-height:14px;font-size:12px;color:#dcdcdc;">Scene Window</div>
<div class="a" style="left:584px;top:637px;width:99px;height:23px;background:#262626;border-radius:5px 5px 0 0"></div>
<div class="a t" style="left:590px;top:642.0px;line-height:14px;font-size:12px;color:#dcdcdc;">JavaScript Editor</div>
<div class="a" style="left:684px;top:637px;width:101px;height:23px;background:#262626;border-radius:5px 5px 0 0"></div>
<div class="a t" style="left:691px;top:642.0px;line-height:14px;font-size:12px;color:#dcdcdc;">Dependency Graph</div>
<div class="a" style="left:494px;top:661px;width:1419px;height:337px;background:#2a2a2a;"></div>
<div class="a" style="left:499px;top:661px;width:1410px;height:20px;background:#464646;border-radius:5px 5px 0 0"></div>
<div class="a t" style="left:1103.0px;top:664.0px;width:200px;text-align:center;line-height:14px;font-size:12px;color:#e0e0e0;">Composition 1</div>
<div class="a" style="left:494px;top:681px;width:699px;height:42px;background:#464646;"></div>
<div class="a" style="left:494px;top:661px;width:5px;height:20px;background:#2a2a2a;"></div>
<div class="a" style="left:496px;top:683px;width:489px;height:20px;background:#2b2b2b;border-radius:10px"></div>
<svg class="a" style="left:501px;top:686px;" width="14" height="14" viewBox="0 0 14 14"><circle cx="5.5" cy="5.5" r="4.3" fill="none" stroke="#e0e0e0" stroke-width="1.2"/><path d="M8.6 8.6 L12.5 12.5" stroke="#e0e0e0" stroke-width="1.8"/></svg>
<div class="a t" style="left:520px;top:686.5px;line-height:14px;font-size:12px;color:#8c8c8c;">Enter a layer name</div>
<div class="a" style="left:987px;top:683px;width:20px;height:20px;background:#2a2a2a;border-radius:4px;border:1px solid #222"></div>
<svg class="a" style="left:987px;top:683px;" width="20" height="20" viewBox="0 0 20 20"><path d="M10 4.5V15.5M4.5 10H15.5" stroke="#e6e6e6" stroke-width="2"/><path d="M16 18 L18 16 V18Z" fill="#3fb"/></svg>
<div class="a" style="left:1031px;top:683px;width:20px;height:20px;background:#2a2a2a;border-radius:4px;border:1px solid #222"></div>
<svg class="a" style="left:1031px;top:683px;" width="20" height="20" viewBox="0 0 20 20"><circle cx="12" cy="7.5" r="4.5" fill="#d8d8d8"/><path d="M5 14 A5 5 0 0 1 9 8" fill="none" stroke="#888" stroke-width="1.3"/><path d="M4 11 A6 6 0 0 0 10 16" fill="none" stroke="#777" stroke-width="1.3"/></svg>
<div class="a" style="left:1053px;top:683px;width:20px;height:20px;background:#2a2a2a;border-radius:4px;border:1px solid #222"></div>
<svg class="a" style="left:1053px;top:683px;" width="20" height="20" viewBox="0 0 20 20"><circle cx="5" cy="5" r="1.2" fill="#ddd"/><circle cx="13" cy="5" r="1.2" fill="#ddd"/><circle cx="5" cy="12" r="1.2" fill="#ddd"/><path d="M12 9V16M8.5 12.5H15.5" stroke="#eee" stroke-width="1.8"/><path d="M16 18 L18 16 V18Z" fill="#3fb"/></svg>
<div class="a" style="left:1075px;top:683px;width:20px;height:20px;background:#2a2a2a;border-radius:4px;border:1px solid #222"></div>
<svg class="a" style="left:1075px;top:683px;" width="20" height="20" viewBox="0 0 20 20"><path d="M3 5H6M10 5H16M3 10H9M13 10H16M3 15H6M10 15H16" stroke="#ddd" stroke-width="1.2"/><circle cx="8" cy="5" r="1.6" fill="none" stroke="#ddd"/><circle cx="11" cy="10" r="1.6" fill="none" stroke="#ddd"/><circle cx="8" cy="15" r="1.6" fill="none" stroke="#ddd"/><path d="M16 18 L18 16 V18Z" fill="#3fb"/></svg>
<div class="a" style="left:1097px;top:683px;width:94px;height:20px;background:#2a2a2a;border-radius:3px"></div>
<div class="a t" style="left:1102px;top:686.5px;line-height:14px;font-size:12px;color:#5a5a5a;">F</div>
<div class="a t" style="left:1113px;top:686.5px;line-height:14px;font-size:12px;color:#e6e6e6;">0</div>
<svg class="a" style="left:499px;top:707px;" width="14" height="14" viewBox="0 0 14 14"><rect x="2.5" y="6.5" width="9" height="7" fill="#d0d0d0"/><path d="M4.5 6.5V4.5A2.5 2.5 0 0 1 9.5 4.5V6.5" fill="none" stroke="#d0d0d0" stroke-width="1.3"/><rect x="6.3" y="9" width="1.4" height="1.6" fill="#333"/></svg>
<svg class="a" style="left:516px;top:707px;" width="16" height="14" viewBox="0 0 16 14"><path d="M1.5 7 Q8 1 14.5 7 Q8 13 1.5 7Z" fill="none" stroke="#ccc" stroke-width="1.1"/><circle cx="8" cy="7" r="2.3" fill="#ccc"/></svg>
<svg class="a" style="left:535px;top:707px;" width="15" height="15" viewBox="0 0 15 15"><path d="M7.5 1.5 L13 4.5 V10.5 L7.5 13.5 L2 10.5 V4.5Z M2 4.5 L7.5 7.5 L13 4.5 M7.5 7.5V13.5" fill="none" stroke="#ccc" stroke-width="1.1"/></svg>
<svg class="a" style="left:554px;top:707px;" width="16" height="14" viewBox="0 0 16 14"><path d="M2 5H5L9 2V12L5 9H2Z" fill="#ccc"/><path d="M11 4.5Q12.5 7 11 9.5M12.5 3Q15 7 12.5 11" fill="none" stroke="#ccc" stroke-width="1.1"/></svg>
<svg class="a" style="left:573px;top:706px;" width="16" height="16" viewBox="0 0 16 16"><path d="M3 14 L10 7" stroke="#bbb" stroke-width="2.2"/><path d="M3.5 13.5 L9.5 7.5" stroke="#464646" stroke-width="0.8"/><path d="M9 5 L12 8 M10 4 Q12 1.5 14 3.5 Q15 5.5 12.5 7" fill="#ccc" stroke="#ccc" stroke-width="2"/></svg>
<svg class="a" style="left:593px;top:708px;" width="16" height="12" viewBox="0 0 16 12"><path d="M1 6 L4.5 2 H15 V10 H4.5Z" fill="#d0d0d0"/><circle cx="5.5" cy="6" r="1.5" fill="#333"/></svg>
<div class="a t" style="left:649px;top:708.0px;line-height:14px;font-size:12px;color:#e0e0e0;">Name</div>
<div class="a" style="left:494px;top:723px;width:684px;height:22px;background:#3c3c3c;"></div>
<div class="a" style="left:497px;top:725px;width:17px;height:18px;background:#2e2e2e;border-radius:3px"></div>
<div class="a" style="left:516px;top:725px;width:17px;height:18px;background:#2e2e2e;border-radius:3px"></div>
<div class="a" style="left:535px;top:725px;width:17px;height:18px;background:#2e2e2e;border-radius:3px"></div>
<svg class="a" style="left:516px;top:727px;" width="17" height="14" viewBox="0 0 17 14"><path d="M2 7 Q8.5 1 15 7 Q8.5 13 2 7Z" fill="none" stroke="#ccc" stroke-width="1.1"/><circle cx="8.5" cy="7" r="2.3" fill="#ccc"/></svg>
<div class="a" style="left:573px;top:726px;width:16px;height:16px;background:#b58cf9;border-radius:3px;border:1px solid #222"></div>
<svg class="a" style="left:593px;top:728px;" width="16" height="12" viewBox="0 0 16 12"><path d="M1 6 L4.5 2 H15 V10 H4.5Z" fill="#d0d0d0"/><circle cx="5.5" cy="6" r="1.5" fill="#333"/></svg>
<div class="a" style="left:1139px;top:726px;width:21px;height:16px;background:#2a2a2a;border-radius:3px"></div>
<svg class="a" style="left:1139px;top:726px;" width="21" height="16" viewBox="0 0 21 16"><path d="M8.5 4 L3.5 8 L8.5 12Z" fill="#e0c070"/><path d="M12.5 4 L17.5 8 L12.5 12Z" fill="#888"/><path d="M10.5 1V15" stroke="#444"/></svg>
<svg class="a" style="left:1163px;top:727px;" width="14" height="14" viewBox="0 0 14 14"><circle cx="7" cy="7" r="4.5" fill="none" stroke="#888" stroke-width="1.1"/></svg>
<div class="a" style="left:494px;top:745px;width:684px;height:22px;background:#434955;"></div>
<div class="a" style="left:497px;top:747px;width:17px;height:18px;background:#2e2e2e;border-radius:3px"></div>
<div class="a" style="left:516px;top:747px;width:17px;height:18px;background:#2e2e2e;border-radius:3px"></div>
<div class="a" style="left:535px;top:747px;width:17px;height:18px;background:#2e2e2e;border-radius:3px"></div>
<svg class="a" style="left:516px;top:749px;" width="17" height="14" viewBox="0 0 17 14"><path d="M2 7 Q8.5 1 15 7 Q8.5 13 2 7Z" fill="none" stroke="#ccc" stroke-width="1.1"/><circle cx="8.5" cy="7" r="2.3" fill="#ccc"/></svg>
<div class="a" style="left:573px;top:748px;width:16px;height:16px;background:#5d8ef0;border-radius:3px;border:1px solid #222"></div>
<svg class="a" style="left:593px;top:750px;" width="16" height="12" viewBox="0 0 16 12"><path d="M1 6 L4.5 2 H15 V10 H4.5Z" fill="#d0d0d0"/><circle cx="5.5" cy="6" r="1.5" fill="#333"/></svg>
<div class="a" style="left:1139px;top:748px;width:21px;height:16px;background:#2a2a2a;border-radius:3px"></div>
<svg class="a" style="left:1139px;top:748px;" width="21" height="16" viewBox="0 0 21 16"><path d="M8.5 4 L3.5 8 L8.5 12Z" fill="#777"/><path d="M12.5 4 L17.5 8 L12.5 12Z" fill="#c44fe6"/><path d="M10.5 1V15" stroke="#444"/></svg>
<svg class="a" style="left:1163px;top:749px;" width="14" height="14" viewBox="0 0 14 14"><circle cx="7" cy="7" r="4.5" fill="none" stroke="#888" stroke-width="1.1"/></svg>
<div class="a" style="left:494px;top:766px;width:684px;height:23px;background:#3c3c3c;"></div>
<div class="a" style="left:497px;top:768px;width:17px;height:18px;background:#2e2e2e;border-radius:3px"></div>
<div class="a" style="left:516px;top:768px;width:17px;height:18px;background:#2e2e2e;border-radius:3px"></div>
<svg class="a" style="left:516px;top:769px;" width="17" height="17" viewBox="0 0 17 17"><circle cx="8.5" cy="8.5" r="5" fill="none" stroke="#ccc" stroke-width="1.1"/><path d="M6 8.5 L8 10.5 L13 5" fill="none" stroke="#ccc" stroke-width="1.3"/></svg>
<div class="a" style="left:573px;top:769px;width:16px;height:16px;background:#c6ee7c;border-radius:3px;border:1px solid #222"></div>
<svg class="a" style="left:593px;top:771px;" width="16" height="12" viewBox="0 0 16 12"><path d="M1 6 L4.5 2 H15 V10 H4.5Z" fill="#d0d0d0"/><circle cx="5.5" cy="6" r="1.5" fill="#333"/></svg>
<div class="a" style="left:1139px;top:769px;width:21px;height:16px;background:#2a2a2a;border-radius:3px"></div>
<svg class="a" style="left:1139px;top:769px;" width="21" height="16" viewBox="0 0 21 16"><path d="M8.5 4 L3.5 8 L8.5 12Z" fill="#e0c070"/><path d="M12.5 4 L17.5 8 L12.5 12Z" fill="#c44fe6"/><path d="M10.5 1V15" stroke="#444"/></svg>
<div class="a" style="left:1139px;top:768px;width:10px;height:18px;background:transparent;border:1px solid #c8a850;border-radius:2px"></div>
<svg class="a" style="left:1163px;top:770px;" width="14" height="14" viewBox="0 0 14 14"><circle cx="7" cy="7" r="4.5" fill="none" stroke="#888" stroke-width="1.1"/></svg>
<div class="a" style="left:612px;top:725px;width:20px;height:18px;background:#383838;border-radius:3px"></div>
<svg class="a" style="left:612px;top:725px;" width="20" height="18" viewBox="0 0 20 18"><path d="M6 7 L10 11 L14 7" fill="none" stroke="#999" stroke-width="1"/></svg>
<div class="a" style="left:636px;top:725px;width:16px;height:18px;background:#383838;"></div>
<svg class="a" style="left:646px;top:725px;" width="18" height="18" viewBox="0 0 18 18"><rect x="2.5" y="2.5" width="13" height="13" fill="none" stroke="#ddd" stroke-width="1" stroke-dasharray="2 1"/><path d="M5 5H13V7.5H10.3V14H7.7V7.5H5Z" fill="#e8d56a"/></svg>
<div class="a t" style="left:667px;top:728.0px;line-height:14px;font-size:12px;color:#e6e6e6;">Jumping Text</div>
<div class="a" style="left:659px;top:744px;width:241px;height:25px;background:transparent;border:3px solid #c5e51f"></div>
<svg class="a" style="left:664px;top:747px;" width="18" height="18" viewBox="0 0 18 18"><circle cx="9" cy="9" r="6.5" fill="none" stroke="#ddd" stroke-width="1.1" stroke-dasharray="1.8 1.4"/><circle cx="9" cy="9" r="3.5" fill="#a8d4f8"/></svg>
<div class="a t" style="left:686px;top:750.0px;line-height:14px;font-size:12px;color:#e6e6e6;">Falloff [Sub-Mesh [Jumping Text]]</div>
<svg class="a" style="left:666px;top:770px;" width="18" height="16" viewBox="0 0 18 16"><path d="M2 3H16" stroke="#8fdc8f" stroke-width="2"/><path d="M2 8H16M2 13H16" stroke="#ddd" stroke-width="1.6"/></svg>
<div class="a t" style="left:686px;top:772.0px;line-height:14px;font-size:12px;color:#e6e6e6;">Sub-Mesh [Jumping Text]</div>
<div class="a" style="left:1181px;top:724px;width:10px;height:236px;background:#505050;border-radius:5px"></div>
<div class="a" style="left:1193px;top:681px;width:7px;height:317px;background:#1e1e1e;"></div>
<div class="a" style="left:1195px;top:833px;width:2px;height:2px;background:#8a8a8a;"></div>
<div class="a" style="left:1195px;top:837px;width:2px;height:2px;background:#8a8a8a;"></div>
<div class="a" style="left:1195px;top:841px;width:2px;height:2px;background:#8a8a8a;"></div>
<div class="a" style="left:1195px;top:845px;width:2px;height:2px;background:#8a8a8a;"></div>
<div class="a" style="left:1195px;top:849px;width:2px;height:2px;background:#8a8a8a;"></div>
<div class="a" style="left:1200px;top:681px;width:713px;height:24px;background:#262626;"></div>
<svg class="a" style="left:0;top:0" width="1920" height="1029"><path d="M1205.5 697V705 M1213.5 700V705 M1222.5 700V705 M1230.5 700V705 M1239.5 700V705 M1247.5 697V705 M1256.5 700V705 M1264.5 700V705 M1272.5 700V705 M1281.5 700V705 M1289.5 697V705 M1298.5 700V705 M1306.5 700V705 M1314.5 700V705 M1323.5 700V705 M1331.5 697V705 M1340.5 700V705 M1348.5 700V705 M1357.5 700V705 M1365.5 700V705 M1373.5 697V705 M1382.5 700V705 M1390.5 700V705 M1399.5 700V705 M1407.5 700V705 M1416.5 697V705 M1424.5 700V705 M1432.5 700V705 M1441.5 700V705 M1449.5 700V705 M1458.5 697V705 M1466.5 700V705 M1474.5 700V705 M1483.5 700V705 M1491.5 700V705 M1500.5 697V705 M1508.5 700V705 M1517.5 700V705 M1525.5 700V705 M1533.5 700V705 M1542.5 697V705 M1550.5 700V705 M1559.5 700V705 M1567.5 700V705 M1575.5 700V705 M1584.5 697V705 M1592.5 700V705 M1601.5 700V705 M1609.5 700V705 M1618.5 700V705 M1626.5 697V705 M1634.5 700V705 M1643.5 700V705 M1651.5 700V705 M1660.5 700V705 M1668.5 697V705 M1677.5 700V705 M1685.5 700V705 M1693.5 700V705 M1702.5 700V705 M1710.5 697V705 M1719.5 700V705 M1727.5 700V705 M1735.5 700V705 M1744.5 700V705 M1752.5 697V705 M1761.5 700V705 M1769.5 700V705 M1778.5 700V705 M1786.5 700V705 M1794.5 697V705 M1803.5 700V705 M1811.5 700V705 M1820.5 700V705 M1828.5 700V705 M1837.5 697V705 M1845.5 700V705 M1853.5 700V705 M1862.5 700V705 M1870.5 700V705 M1879.5 697V705 M1887.5 700V705 M1895.5 700V705 M1904.5 700V705" stroke="#a0a0a0" stroke-width="1"/></svg>
<div class="a t" style="left:1185.5px;top:683.0px;width:40px;text-align:center;line-height:14px;font-size:12px;color:#dcdcdc;">0</div>
<div class="a t" style="left:1227.6px;top:683.0px;width:40px;text-align:center;line-height:14px;font-size:12px;color:#dcdcdc;">15</div>
<div class="a t" style="left:1269.7px;top:683.0px;width:40px;text-align:center;line-height:14px;font-size:12px;color:#dcdcdc;">30</div>
<div class="a t" style="left:1311.8px;top:683.0px;width:40px;text-align:center;line-height:14px;font-size:12px;color:#dcdcdc;">45</div>
<div class="a t" style="left:1353.9px;top:683.0px;width:40px;text-align:center;line-height:14px;font-size:12px;color:#dcdcdc;">60</div>
<div class="a t" style="left:1396.0px;top:683.0px;width:40px;text-align:center;line-height:14px;font-size:12px;color:#dcdcdc;">75</div>
<div class="a t" style="left:1438.1px;top:683.0px;width:40px;text-align:center;line-height:14px;font-size:12px;color:#dcdcdc;">90</div>
<div class="a t" style="left:1480.2px;top:683.0px;width:40px;text-align:center;line-height:14px;font-size:12px;color:#dcdcdc;">105</div>
<div class="a t" style="left:1522.3px;top:683.0px;width:40px;text-align:center;line-height:14px;font-size:12px;color:#dcdcdc;">120</div>
<div class="a t" style="left:1564.4px;top:683.0px;width:40px;text-align:center;line-height:14px;font-size:12px;color:#dcdcdc;">135</div>
<div class="a t" style="left:1606.5px;top:683.0px;width:40px;text-align:center;line-height:14px;font-size:12px;color:#dcdcdc;">150</div>
<div class="a t" style="left:1648.6px;top:683.0px;width:40px;text-align:center;line-height:14px;font-size:12px;color:#dcdcdc;">165</div>
<div class="a t" style="left:1690.7px;top:683.0px;width:40px;text-align:center;line-height:14px;font-size:12px;color:#dcdcdc;">180</div>
<div class="a t" style="left:1732.8px;top:683.0px;width:40px;text-align:center;line-height:14px;font-size:12px;color:#dcdcdc;">195</div>
<div class="a t" style="left:1774.9px;top:683.0px;width:40px;text-align:center;line-height:14px;font-size:12px;color:#dcdcdc;">210</div>
<div class="a t" style="left:1817.0px;top:683.0px;width:40px;text-align:center;line-height:14px;font-size:12px;color:#dcdcdc;">225</div>
<div class="a t" style="left:1859.1px;top:683.0px;width:40px;text-align:center;line-height:14px;font-size:12px;color:#dcdcdc;">240</div>
<div class="a" style="left:1200px;top:705px;width:707px;height:17px;background:#464646;"></div>
<div class="a" style="left:1203px;top:704px;width:6px;height:18px;background:#6fc0a8;border-radius:1px"></div>
<div class="a" style="left:1907px;top:704px;width:6px;height:18px;background:#6fc0a8;border-radius:1px"></div>
<div class="a" style="left:1200px;top:722px;width:713px;height:238px;background:#2a2a2a;"></div>
<div class="a" style="left:1200px;top:722px;width:707px;height:23px;background:#2e2e2e;"></div>
<div class="a" style="left:1208px;top:725px;width:699px;height:18px;background:#b58cf9;border-radius:3px"></div>
<div class="a t" style="left:1215px;top:727.5px;line-height:14px;font-size:12px;color:#fafafa;">Jumping Text</div>
<div class="a" style="left:1208px;top:746px;width:699px;height:19px;border-radius:3px;border:1px solid #e8e8e8;background-color:#5d8ef0;background-image:radial-gradient(circle,#9ab8f8 0.9px,transparent 1.1px);background-size:3px 3px"></div>
<div class="a t" style="left:1215px;top:749.0px;line-height:14px;font-size:12px;color:#f4f4f4;">Falloff [Sub-Mesh [Jumping Text]]</div>
<div class="a" style="left:1208px;top:768px;width:699px;height:18px;background:repeating-linear-gradient(-55deg,#bde070 0 10px,#d6f58a 10px 16px)"></div>
<div class="a t" style="left:1215px;top:770.5px;line-height:14px;font-size:12px;color:#222;">Sub-Mesh [Jumping Text]</div>
<div class="a" style="left:1205.5px;top:703px;width:1.5px;height:257px;background:#5fa895;"></div>
<svg class="a" style="left:1199px;top:695px;" width="14" height="10" viewBox="0 0 14 10"><path d="M0.5 0.5 H13 L6.8 9 Z" fill="#6fc0a8"/></svg>
<div class="a" style="left:494px;top:960px;width:699px;height:16px;background:#2a2a2a;"></div>
<div class="a" style="left:496px;top:964px;width:682px;height:10px;background:#505050;border-radius:5px"></div>
<div class="a" style="left:1200px;top:960px;width:713px;height:16px;background:#2a2a2a;"></div>
<div class="a" style="left:1202px;top:964px;width:709px;height:10px;background:#505050;border-radius:5px"></div>
<div class="a" style="left:494px;top:976px;width:699px;height:22px;background:#3c3c3c;"></div>
<div class="a" style="left:497px;top:978px;width:19px;height:19px;background:#2a2a2a;border-radius:4px;border:1px solid #222"></div>
<svg class="a" style="left:499px;top:982px;" width="16" height="12" viewBox="0 0 16 12"><path d="M1 6 L4.5 2 H15 V10 H4.5Z" fill="#d0d0d0"/><circle cx="5.5" cy="6" r="1.5" fill="#333"/></svg>
<div class="a t" style="left:520px;top:981.0px;line-height:14px;font-size:12px;color:#e0e0e0;">1 selected</div>
<div class="a" style="left:985px;top:978px;width:18px;height:19px;background:#2a2a2a;border-radius:4px;border:1px solid #222"></div>
<svg class="a" style="left:985px;top:978px;" width="18" height="19" viewBox="0 0 18 19"><rect x="4" y="4.5" width="10" height="10" fill="none" stroke="#ccc" stroke-width="1.1"/><rect x="7" y="7.5" width="4" height="4" fill="#ccc"/></svg>
<div class="a" style="left:1008px;top:977px;width:181px;height:20px;background:#575757;border-radius:4px"></div>
<div class="a" style="left:1009px;top:978px;width:88px;height:18px;background:#2a2a2a;border-radius:3px"></div>
<svg class="a" style="left:1012px;top:980px;" width="16" height="14" viewBox="0 0 16 14"><path d="M3 3H13M5 7H13M3 11H11" stroke="#35c75a" stroke-width="1.8"/></svg>
<div class="a t" style="left:1030px;top:981.0px;line-height:14px;font-size:12px;color:#e6e6e6;">Time Editor</div>
<svg class="a" style="left:1101px;top:980px;" width="16" height="14" viewBox="0 0 16 14"><path d="M3 2V12H14" fill="none" stroke="#ccc" stroke-width="1"/><path d="M4 11 L12 4" stroke="#ccc" stroke-width="1.2"/></svg>
<div class="a t" style="left:1119px;top:981.0px;line-height:14px;font-size:12px;color:#e6e6e6;">Graph Editor</div>
<div class="a" style="left:1200px;top:976px;width:713px;height:22px;background:#3c3c3c;"></div>
<div class="a" style="left:1203px;top:978px;width:18px;height:19px;background:#2a2a2a;border-radius:4px;border:1px solid #222"></div>
<svg class="a" style="left:1203px;top:978px;" width="18" height="19" viewBox="0 0 18 19"><path d="M4 5H15M4 9.5H5.5M7 9.5H15M4 14H8M10 14H11.5" stroke="#e0e0e0" stroke-width="1.6"/><path d="M15 17 L17 15 V17Z" fill="#3fb"/></svg>
<div class="a" style="left:1224px;top:979px;width:148px;height:17px;background:#2a2a2a;border-radius:3px"></div>
<div class="a t" style="left:1226px;top:981.0px;line-height:14px;font-size:12px;color:#e6e6e6;">Default Keyframe Layer</div>
<div class="a" style="left:1380px;top:979px;width:68px;height:17px;background:#2a2a2a;border-radius:3px"></div>
<div class="a t" style="left:1385px;top:981.0px;line-height:14px;font-size:12px;color:#555;">F</div>
<div class="a t" style="left:1397px;top:981.0px;line-height:14px;font-size:12px;color:#cfcfcf;">-</div>
<div class="a t" style="left:1455px;top:981.0px;line-height:14px;font-size:12px;color:#e0e0e0;">Align:</div>
<div class="a" style="left:1493px;top:978px;width:56px;height:19px;background:#2a2a2a;border-radius:4px;border:1px solid #222"></div>
<svg class="a" style="left:1493.0px;top:978px;" width="18" height="19" viewBox="0 0 18 19"><path d="M3 4V15" stroke="#ddd" stroke-width="1"/><path d="M5 6H7M9 6H14M5 12H7M9 12H13" stroke="#ddd" stroke-width="1.5"/></svg>
<svg class="a" style="left:1511.5px;top:978px;" width="18" height="19" viewBox="0 0 18 19"><path d="M9 3V16" stroke="#ddd" stroke-width="1"/><path d="M4 6H7M11 6H14M4 12H7M11 12H14" stroke="#ddd" stroke-width="1.5"/></svg>
<svg class="a" style="left:1530.0px;top:978px;" width="18" height="19" viewBox="0 0 18 19"><path d="M15 4V15" stroke="#ddd" stroke-width="1"/><path d="M4 6H7M9 6H13M5 12H7M9 12H13" stroke="#ddd" stroke-width="1.5"/></svg>
<div class="a" style="left:1550px;top:978px;width:19px;height:19px;background:#2a2a2a;border-radius:4px;border:1px solid #222"></div>
<svg class="a" style="left:1550px;top:978px;" width="19" height="19" viewBox="0 0 19 19"><rect x="4" y="4.5" width="11" height="10" fill="none" stroke="#ccc" stroke-width="1" stroke-dasharray="1.5 1"/><rect x="7" y="7.5" width="5" height="4" fill="#ccc"/></svg>
<div class="a" style="left:1571px;top:978px;width:34px;height:19px;background:#2a2a2a;border-radius:4px;border:1px solid #222"></div>
<svg class="a" style="left:1571px;top:978px;" width="19" height="19" viewBox="0 0 19 19"><path d="M5 14 V9 A4.5 4.5 0 0 1 14 9 V10" fill="none" stroke="#ddd" stroke-width="2.2"/></svg>
<svg class="a" style="left:1590px;top:978px;" width="12" height="19" viewBox="0 0 12 19"><path d="M3 6 L8 9.5 L3 13Z" fill="none" stroke="#999" stroke-width="1"/></svg>
<div class="a" style="left:1606px;top:978px;width:34px;height:19px;background:#2a2a2a;border-radius:4px;border:1px solid #222"></div>
<svg class="a" style="left:1606px;top:978px;" width="19" height="19" viewBox="0 0 19 19"><path d="M3 9.5H7M11 9.5H16M9 4V15M6.5 7V12M12 7V12" stroke="#ccc" stroke-width="1"/></svg>
<svg class="a" style="left:1625px;top:978px;" width="12" height="19" viewBox="0 0 12 19"><path d="M3 6 L8 9.5 L3 13Z" fill="none" stroke="#999" stroke-width="1"/></svg>
<svg class="a" style="left:1741px;top:979px;" width="17" height="17" viewBox="0 0 17 17"><circle cx="7.5" cy="7.5" r="5.3" fill="none" stroke="#ccc" stroke-width="1.2"/><path d="M11.3 11.3L15 15" stroke="#ccc" stroke-width="1.6"/><path d="M5 7.5H10" stroke="#ccc" stroke-width="1.2"/></svg>
<div class="a" style="left:1760px;top:982px;width:8px;height:8px;background:#6fcfb0;border-radius:50%"></div>
<div class="a" style="left:1767px;top:985px;width:130px;height:3px;background:#2f2f2f;border-radius:2px"></div>
<svg class="a" style="left:1885px;top:979px;" width="17" height="17" viewBox="0 0 17 17"><circle cx="7.5" cy="7.5" r="5.3" fill="none" stroke="#ccc" stroke-width="1.2"/><path d="M11.3 11.3L15 15" stroke="#ccc" stroke-width="1.6"/><path d="M5 7.5H10M7.5 5V10" stroke="#ccc" stroke-width="1.2"/></svg>
<div class="a" style="left:494px;top:1004px;width:1420px;height:22px;background:#3a3a3a;"></div>
<div class="a" style="left:498px;top:1010px;width:2px;height:2px;background:#8a8a8a;"></div>
<div class="a" style="left:498px;top:1014px;width:2px;height:2px;background:#8a8a8a;"></div>
<div class="a" style="left:498px;top:1018px;width:2px;height:2px;background:#8a8a8a;"></div>
<div class="a" style="left:506px;top:1006px;width:18px;height:19px;background:#2a2a2a;border-radius:4px"></div>
<svg class="a" style="left:506px;top:1006px;" width="18" height="19" viewBox="0 0 18 19"><path d="M3 4H15V12H8L5 15V12H3Z" fill="#e0e0e0"/><path d="M5.5 7H12.5M5.5 9.5H12.5" stroke="#333" stroke-width="1"/><path d="M15 18 L17 16 V18Z" fill="#3fb"/></svg>
<div class="a" style="left:529px;top:1008px;width:17px;height:14px;background:#2fc15f;border-radius:2px"></div>
<div class="a t" style="left:529.0px;top:1008.5px;width:17px;text-align:center;line-height:14px;font-size:11px;color:#1a3a22;">1</div>
<div class="a" style="left:554px;top:1012px;width:5px;height:5px;background:#2fc15f;border-radius:50%"></div>
<div class="a t" style="left:565px;top:1008.5px;line-height:14px;font-size:12px;color:#e0e0e0;">Undo (Set Attribute (1))</div>
<div class="a t" style="left:1082px;top:1008.5px;width:400px;text-align:right;line-height:14px;font-size:12px;color:#e0e0e0;font-style:italic;letter-spacing:-0.6px">Click to see next message</div>
<div class="a" style="left:1488px;top:1006px;width:80px;height:19px;background:#d4b86a;border-radius:2px"></div>
<div class="a t" style="left:1493px;top:1009.0px;line-height:14px;font-size:12px;color:#222;">Feedback</div>
<svg class="a" style="left:1552px;top:1008px;" width="14" height="15" viewBox="0 0 14 15"><rect x="2" y="1.5" width="9" height="12" fill="#fff" stroke="#bbb" stroke-width="0.8"/><path d="M5 5H9M5 8H9" stroke="#e07050" stroke-width="1"/><path d="M8 12 L13 6" stroke="#e8a040" stroke-width="2"/></svg>
<div class="a" style="left:1571px;top:1006px;width:109px;height:19px;background:#35c472;border-radius:2px"></div>
<div class="a t" style="left:1576px;top:1009.0px;line-height:14px;font-size:12px;color:#111;">Upgrade to Pro</div>
<svg class="a" style="left:1664px;top:1008px;" width="14" height="15" viewBox="0 0 14 15"><ellipse cx="4" cy="9" rx="3" ry="4.5" fill="#f5c330"/><ellipse cx="10" cy="9" rx="3" ry="4.5" fill="#f5c330"/></svg>
<div class="a" style="left:1683px;top:1006px;width:119px;height:19px;background:#b58cf9;border-radius:2px"></div>
<div class="a t" style="left:1688px;top:1009.0px;line-height:14px;font-size:12px;color:#111;">Update Available</div>
<svg class="a" style="left:1786px;top:1008px;" width="14" height="15" viewBox="0 0 14 15"><circle cx="7" cy="8.5" r="5.5" fill="#f5c330"/><path d="M2 3 L5 1 L4 5Z" fill="#e85090"/><circle cx="5" cy="8" r="0.8" fill="#333"/><circle cx="9" cy="8" r="0.8" fill="#333"/></svg>
<div class="a" style="left:1805px;top:1006px;width:106px;height:19px;background:#3aaef0;border-radius:2px"></div>
<div class="a t" style="left:1810px;top:1009.0px;line-height:14px;font-size:12px;color:#111;">Tips and Tricks</div>
<svg class="a" style="left:1895px;top:1008px;" width="14" height="15" viewBox="0 0 14 15"><path d="M3 12 L11 3 Q13 2 12.5 4.5 L5 13Z" fill="#e8e8f0"/><path d="M2 13 L4 10 L5 12Z" fill="#f06030"/><circle cx="9" cy="6.5" r="1.2" fill="#4080e0"/></svg>
</body></html>
